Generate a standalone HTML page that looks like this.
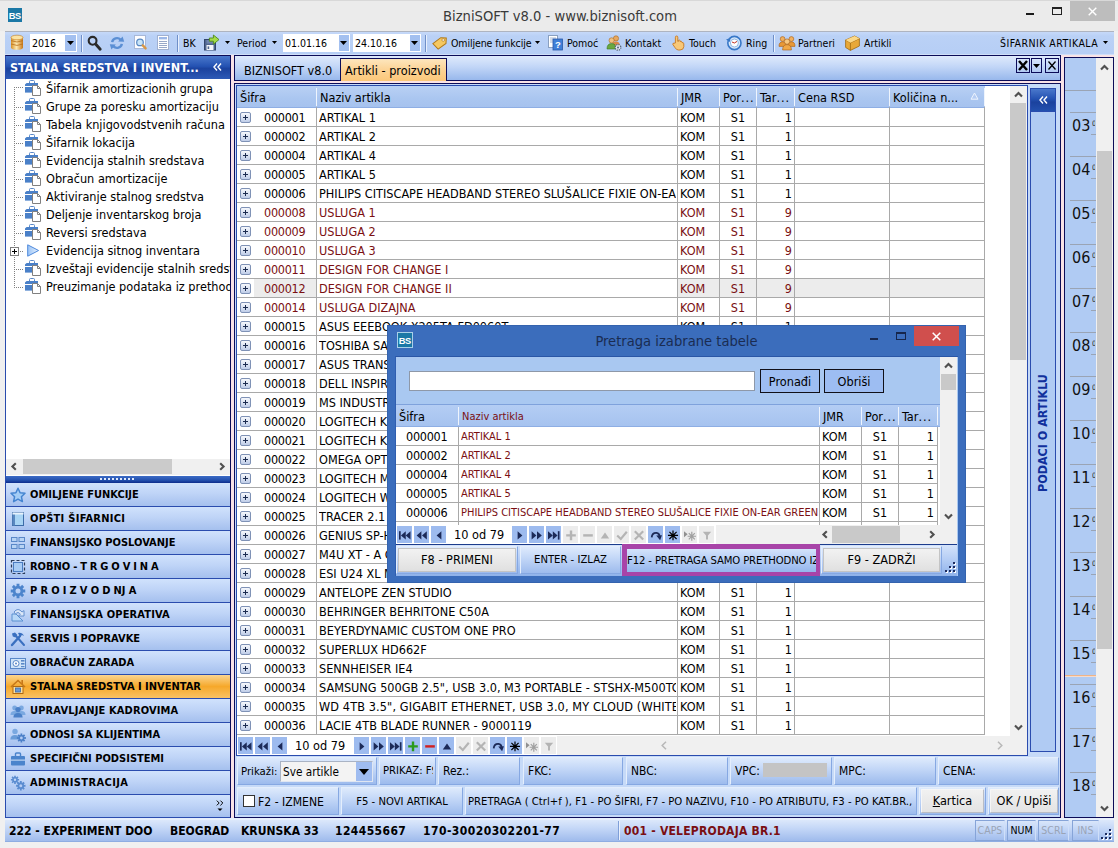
<!DOCTYPE html><html><head><meta charset="utf-8"><title>BizniSOFT v8.0</title><style>
html,body{margin:0;padding:0;}
body{width:1118px;height:848px;overflow:hidden;background:#f0f0f0;position:relative;font-family:"DejaVu Sans Condensed","Liberation Sans","DejaVu Sans",sans-serif;font-size:12.5px;color:#000;}
div{position:absolute;box-sizing:border-box;white-space:nowrap;}
svg{position:absolute;overflow:visible;}
.t{line-height:16px;height:16px;}
.tb{font-size:10.5px;line-height:14px;height:14px;}
.b{font-weight:bold;}
.nav{left:6px;width:224px;height:24px;border-bottom:1px solid #2a4cae;background:linear-gradient(#d0e2fc 0%,#bfd4f7 45%,#a5c0ee 100%);}
.nav span{position:absolute;left:24px;top:5px;font-weight:bold;font-size:11px;line-height:14px;}
.nav.sel{background:linear-gradient(#fbd590 0%,#f6a82a 50%,#f9c264 100%);}
.pan{background:linear-gradient(#deeafc 0%,#c3d7f7 42%,#9dbbed 100%);border:1px solid #86a8e2;border-top-color:#e4eefc;border-left-color:#e4eefc;}
.cell{overflow:hidden;line-height:18px;height:18px;}
.r{color:#7a0f12;}
.nb{width:15px;height:17px;background:#9dbbef;}
.nbd{width:15px;height:17px;background:#ececec;}
</style></head><body>
<div style="left:0px;top:0px;width:1118px;height:31px;background:#ebebeb"></div>
<div style="left:0px;top:0px;width:1118px;height:1px;background:#d8d8d8"></div>
<div style="left:5px;top:31px;width:1109px;height:1px;background:#aeb4c0"></div>
<div style="left:8px;top:8px;width:14px;height:14px;background:#1b78a6;color:#fff;font-weight:bold;font-size:9.3px;line-height:14px;padding-top:1px;text-align:center;letter-spacing:-0.5px;text-indent:-0.5px;overflow:hidden;font-family:'Liberation Sans',sans-serif">BS</div>
<div style="left:0;top:6px;width:1118px;height:20px;line-height:20px;text-align:center;font-size:14.6px;color:#3a3a3a;padding-left:2px">BizniSOFT v8.0 - www.biznisoft.com</div>
<div style="left:1026px;top:13px;width:8px;height:2px;background:#1a1a1a"></div>
<div style="left:1052px;top:7px;width:10px;height:8px;border:1px solid #222;border-top-width:2px"></div>
<div style="left:1070px;top:1px;width:45px;height:20px;background:#bdbdbd"></div>
<svg style="left:1088px;top:7px" width="9" height="9"><path d="M.7 .7 L8.3 8.3 M8.3 .7 L.7 8.3" stroke="#fff" stroke-width="1.4" fill="none"/></svg>
<div style="left:5px;top:32px;width:1109px;height:23px;background:linear-gradient(#c6d9f9 0,#bad1f6 4px,#b6cef5 100%)"></div>
<div style="left:5px;top:54px;width:1109px;height:765px;background:#f9e2e6"></div>
<div style="left:5px;top:54px;width:1109px;height:1px;background:#cfdff8"></div>
<svg style="left:11px;top:35px" width="12" height="15" viewBox="0 0 12 15"><defs><linearGradient id="gd" x1="0" x2="1"><stop offset="0" stop-color="#d8922a"/><stop offset=".45" stop-color="#fde9b0"/><stop offset="1" stop-color="#c87818"/></linearGradient></defs><rect x="0" y="2" width="12" height="11" fill="url(#gd)"/><ellipse cx="6" cy="2.5" rx="6" ry="2.3" fill="#fbe3a4" stroke="#c27a1c" stroke-width=".6"/><ellipse cx="6" cy="12.5" rx="6" ry="2.3" fill="url(#gd)"/><path d="M0 5.6 Q6 8.4 12 5.6 M0 9 Q6 11.8 12 9" stroke="#b96f18" stroke-width=".8" fill="none"/></svg>
<div style="left:30px;top:34px;width:47px;height:18px;background:#fff"></div>
<div style="left:65px;top:35px;width:11px;height:16px;background:#a3c0f0"></div>
<svg style="left:67px;top:41px" width="7" height="4"><path d="M0 0H7L3.5 4Z" fill="#000"/></svg>
<div class="t tb" style="left:32px;top:36px;">2016</div>
<div style="left:81px;top:35px;width:1px;height:17px;background:#6f8fc8"></div>
<div style="left:82px;top:35px;width:1px;height:17px;background:#e8f0fd"></div>
<svg style="left:87px;top:35px" width="15" height="16" viewBox="0 0 15 16"><circle cx="5.6" cy="5.8" r="3.9" fill="none" stroke="#2a2a2a" stroke-width="2.1"/><path d="M8.8 9.2 L13.2 14.2" stroke="#2a2a2a" stroke-width="2.9" stroke-linecap="round"/></svg>
<svg style="left:109px;top:36px" width="16" height="14" viewBox="0 0 16 14"><g fill="none" stroke="#5b8fd4" stroke-width="2.4"><path d="M3.2 6.2 A4.9 4.6 0 0 1 11.6 3.6"/><path d="M12.8 7.8 A4.9 4.6 0 0 1 4.4 10.4"/></g><path d="M9.2 5.6 L15.2 5.8 L13.6 .6Z" fill="#5b8fd4"/><path d="M6.8 8.4 L.8 8.2 L2.4 13.4Z" fill="#5b8fd4"/></svg>
<svg style="left:134px;top:35px" width="15" height="16" viewBox="0 0 15 16"><rect x=".5" y=".5" width="11" height="13" fill="#fdfdff" stroke="#a8b8d8"/><circle cx="6" cy="7.4" r="3.3" fill="#c8e4f8" stroke="#5888c4" stroke-width="1.2"/><path d="M8.8 10.4 L11.6 13.4" stroke="#d89848" stroke-width="2.4" stroke-linecap="round"/></svg>
<svg style="left:157px;top:35px" width="13" height="16" viewBox="0 0 13 16"><rect x=".5" y=".5" width="11" height="14" fill="#fff" stroke="#a0b0d0"/><rect x="2" y="2" width="8" height="2.4" fill="#9db8e8"/><path d="M2 6.5H10M2 8.5H10M2 10.5H10M2 12.5H10" stroke="#98a8c8" stroke-width="1"/></svg>
<div style="left:177px;top:35px;width:1px;height:17px;background:#6f8fc8"></div>
<div style="left:178px;top:35px;width:1px;height:17px;background:#e8f0fd"></div>
<div class="t tb" style="left:183px;top:36px;">BK</div>
<svg style="left:203px;top:34px" width="17" height="17" viewBox="0 0 17 17"><rect x="1.5" y="5.5" width="11" height="10.5" fill="#4f6690" stroke="#33466c"/><rect x="3.5" y="6" width="7" height="3.6" fill="#6e84ac"/><rect x="3.5" y="11" width="7" height="5" fill="#f4f6fa"/><rect x="4.6" y="12.4" width="1.6" height="2.6" fill="#4f6690"/><path d="M6.4 4H10.4V1L16 5.6L10.4 10.2V7.2H6.4Z" fill="#a4dc48" stroke="#4f8a1c" stroke-width=".9"/></svg>
<svg style="left:225px;top:41px" width="5" height="3"><path d="M0 0H5L2.5 3Z" fill="#000"/></svg>
<div class="t tb" style="left:237px;top:36px;">Period</div>
<svg style="left:272px;top:41px" width="5" height="3"><path d="M0 0H5L2.5 3Z" fill="#000"/></svg>
<div style="left:283px;top:34px;width:67px;height:18px;background:#fff"></div>
<div style="left:339px;top:35px;width:10px;height:16px;background:#a3c0f0"></div>
<svg style="left:340px;top:41px" width="7" height="4"><path d="M0 0H7L3.5 4Z" fill="#000"/></svg>
<div class="t tb" style="left:285px;top:36px;">01.01.16</div>
<div style="left:353px;top:34px;width:68px;height:18px;background:#fff"></div>
<div style="left:410px;top:35px;width:10px;height:16px;background:#a3c0f0"></div>
<svg style="left:411px;top:41px" width="7" height="4"><path d="M0 0H7L3.5 4Z" fill="#000"/></svg>
<div class="t tb" style="left:355px;top:36px;">24.10.16</div>
<div style="left:425px;top:35px;width:1px;height:17px;background:#6f8fc8"></div>
<div style="left:426px;top:35px;width:1px;height:17px;background:#e8f0fd"></div>
<svg style="left:432px;top:36px" width="15" height="14" viewBox="0 0 15 14"><path d="M1 8.5 L8 1.5 L13.5 1 L14 6.5 L7 13.2 Z" fill="#f5c860" stroke="#b07818" stroke-width="1" transform="rotate(8 7 7)"/><circle cx="11.2" cy="4" r="1.3" fill="#fff" stroke="#b07818" stroke-width=".7"/></svg>
<div class="t tb" style="left:451px;top:36px;letter-spacing:-0.1px">Omiljene funkcije</div>
<svg style="left:535px;top:41px" width="5" height="3"><path d="M0 0H5L2.5 3Z" fill="#000"/></svg>
<svg style="left:548px;top:35px" width="15" height="16" viewBox="0 0 15 16"><rect x=".5" y=".5" width="9" height="12" fill="#fff" stroke="#8aa0c0"/><path d="M2 3H8M2 5H8M2 7H8" stroke="#a8b8d0"/><rect x="5" y="4" width="9.5" height="11" fill="#3f7fd8" stroke="#2a58a8" stroke-width=".8"/><text x="9.8" y="13" font-size="9.5" font-weight="bold" fill="#fff" text-anchor="middle" font-family="Liberation Sans,sans-serif">?</text></svg>
<div class="t tb" style="left:567px;top:36px;">Pomoć</div>
<svg style="left:607px;top:35px" width="15" height="16" viewBox="0 0 15 16"><circle cx="9" cy="3.4" r="2.6" fill="#e8a860" stroke="#a86820" stroke-width=".6"/><path d="M5 11 Q5 6.5 9 6.5 Q13 6.5 13 11Z" fill="#d88848"/><circle cx="4.6" cy="5.4" r="2.6" fill="#f0c080" stroke="#a86820" stroke-width=".6"/><path d="M0 14 Q0 8.6 4.6 8.6 Q9.2 8.6 9.2 14Z" fill="#6aa840" stroke="#3c7820" stroke-width=".6"/><circle cx="11" cy="12.4" r="2.8" fill="#e4e8f0" stroke="#55657c" stroke-width="1.3" stroke-dasharray="1.3 .9"/><circle cx="11" cy="12.4" r="1" fill="#55657c"/></svg>
<div class="t tb" style="left:625px;top:36px;">Kontakt</div>
<svg style="left:672px;top:35px" width="13" height="16" viewBox="0 0 13 16"><path d="M3.4 8V2.2Q3.4 1 4.6 1T5.8 2.2V6.4H6.4V5.4Q7.4 4.6 8.2 5.6V6.6Q9.4 5.8 10 7V7.6Q11.6 7.2 11.8 8.8V11.6Q11.6 15 8 15H6.4Q4.4 15 3 12.6L.8 9.4Q.6 8 2 8.2Z" fill="#f8c878" stroke="#c87820" stroke-width=".9"/></svg>
<div class="t tb" style="left:689px;top:36px;">Touch</div>
<svg style="left:726px;top:35px" width="16" height="16" viewBox="0 0 16 16"><circle cx="8.4" cy="8" r="6.6" fill="#d8e8fa" stroke="#3878c8" stroke-width="1.6"/><circle cx="8.4" cy="8" r="4" fill="#fff" stroke="#78a8e0" stroke-width=".8"/><path d="M8.4 8 L11 6.4 M8.4 8 L6 7" stroke="#c03020" stroke-width="1"/><path d="M0 4.5 L4.6 3 L3.8 7Z" fill="#3878c8"/></svg>
<div class="t tb" style="left:746px;top:36px;">Ring</div>
<div style="left:773px;top:35px;width:1px;height:17px;background:#6f8fc8"></div>
<div style="left:774px;top:35px;width:1px;height:17px;background:#e8f0fd"></div>
<svg style="left:779px;top:35px" width="16" height="16" viewBox="0 0 16 16"><g stroke="#a85c10" stroke-width=".6"><circle cx="3.6" cy="4" r="2.4" fill="#f0b060"/><path d="M0 11.4Q0 6.8 3.6 6.8T7.2 11.4Z" fill="#e89838"/><circle cx="12.4" cy="4" r="2.4" fill="#f0b060"/><path d="M8.8 11.4Q8.8 6.8 12.4 6.8T16 11.4Z" fill="#e89838"/><circle cx="8" cy="6.6" r="2.7" fill="#f8c880"/><path d="M3.6 15Q3.6 9.6 8 9.6T12.4 15Z" fill="#f0a848"/></g></svg>
<div class="t tb" style="left:798px;top:36px;">Partneri</div>
<svg style="left:845px;top:35px" width="15" height="16" viewBox="0 0 15 16"><path d="M.6 5 L9.6 1 L14.4 3.6 L14.4 11 L5.4 15.4 L.6 12.4Z" fill="#e8a838" stroke="#a06810" stroke-width=".8"/><path d="M.6 5 L5.4 7.8 L14.4 3.6 M5.4 7.8 V15.4" stroke="#a06810" stroke-width=".8" fill="none"/><path d="M.6 5 L9.6 1 L14.4 3.6 L5.4 7.8Z" fill="#fbd888"/></svg>
<div class="t tb" style="left:864px;top:36px;">Artikli</div>
<div class="t tb" style="left:1000px;top:36px;letter-spacing:0.45px">ŠIFARNIK ARTIKALA</div>
<svg style="left:1103px;top:41px" width="5" height="3"><path d="M0 0H5L2.5 3Z" fill="#000"/></svg>
<div style="left:5px;top:55px;width:226px;height:763px;background:#fff;border:1px solid #2a4cae;border-top-color:#0c0c58;border-right-color:#0c0c58"></div>
<div style="left:6px;top:56px;width:224px;height:23px;background:linear-gradient(#4a78cc 0%,#2452b2 45%,#1b429e 55%,#2d5ab6 100%)"></div>
<div class="t" style="left:10px;top:60px;color:#fff;font-weight:bold;font-size:12.5px">STALNA SREDSTVA I INVENT...</div>
<svg style="left:213px;top:63px" width="9" height="8"><path d="M4 .5L1 4L4 7.5M8 .5L5 4L8 7.5" stroke="#fff" stroke-width="1.4" fill="none"/></svg>
<div style="left:6px;top:79px;width:224px;height:380px;overflow:hidden"><!--tree--></div>
<div style="left:14px;top:87px;width:1px;height:201px;background:repeating-linear-gradient(#808080 0 1px,transparent 1px 2px)"></div>
<div style="left:15px;top:87px;width:9px;height:1px;background:repeating-linear-gradient(90deg,transparent 0 1px,#808080 1px 2px)"></div>
<svg style="left:25px;top:80px" width="16" height="16" viewBox="0 0 16 16"><path d="M4.5 3V1.5Q4.5 .5 5.5 .5H8.5Q9.5 .5 9.5 1.5V3" fill="none" stroke="#5a88c8" stroke-width="1"/><path d="M0 6V4.6L1.6 3H13V6Z" fill="#4a80c8"/><rect x="0" y="7" width="7" height="5.6" fill="#4a80c8"/><path d="M7.5 5.5H12.5L15.5 8.5V15.5H7.5Z" fill="#fff" stroke="#808080" stroke-width="1"/><path d="M12.5 5.5V8.5H15.5" fill="none" stroke="#808080" stroke-width="1"/></svg>
<div class="t" style="left:46px;top:80px;width:184px;overflow:hidden;line-height:17px;height:18px;font-size:12.6px">Šifarnik amortizacionih grupa</div>
<div style="left:15px;top:107px;width:9px;height:1px;background:repeating-linear-gradient(90deg,transparent 0 1px,#808080 1px 2px)"></div>
<svg style="left:25px;top:98px" width="16" height="16" viewBox="0 0 16 16"><path d="M4.5 3V1.5Q4.5 .5 5.5 .5H8.5Q9.5 .5 9.5 1.5V3" fill="none" stroke="#5a88c8" stroke-width="1"/><path d="M0 6V4.6L1.6 3H13V6Z" fill="#4a80c8"/><rect x="0" y="7" width="7" height="5.6" fill="#4a80c8"/><path d="M7.5 5.5H12.5L15.5 8.5V15.5H7.5Z" fill="#fff" stroke="#808080" stroke-width="1"/><path d="M12.5 5.5V8.5H15.5" fill="none" stroke="#808080" stroke-width="1"/></svg>
<div class="t" style="left:46px;top:98px;width:184px;overflow:hidden;line-height:17px;height:18px;font-size:12.6px">Grupe za poresku amortizaciju</div>
<div style="left:15px;top:125px;width:9px;height:1px;background:repeating-linear-gradient(90deg,transparent 0 1px,#808080 1px 2px)"></div>
<svg style="left:25px;top:116px" width="16" height="16" viewBox="0 0 16 16"><path d="M4.5 3V1.5Q4.5 .5 5.5 .5H8.5Q9.5 .5 9.5 1.5V3" fill="none" stroke="#5a88c8" stroke-width="1"/><path d="M0 6V4.6L1.6 3H13V6Z" fill="#4a80c8"/><rect x="0" y="7" width="7" height="5.6" fill="#4a80c8"/><path d="M7.5 5.5H12.5L15.5 8.5V15.5H7.5Z" fill="#fff" stroke="#808080" stroke-width="1"/><path d="M12.5 5.5V8.5H15.5" fill="none" stroke="#808080" stroke-width="1"/></svg>
<div class="t" style="left:46px;top:116px;width:184px;overflow:hidden;line-height:17px;height:18px;font-size:12.6px">Tabela knjigovodstvenih računa</div>
<div style="left:15px;top:143px;width:9px;height:1px;background:repeating-linear-gradient(90deg,transparent 0 1px,#808080 1px 2px)"></div>
<svg style="left:25px;top:134px" width="16" height="16" viewBox="0 0 16 16"><path d="M4.5 3V1.5Q4.5 .5 5.5 .5H8.5Q9.5 .5 9.5 1.5V3" fill="none" stroke="#5a88c8" stroke-width="1"/><path d="M0 6V4.6L1.6 3H13V6Z" fill="#4a80c8"/><rect x="0" y="7" width="7" height="5.6" fill="#4a80c8"/><path d="M7.5 5.5H12.5L15.5 8.5V15.5H7.5Z" fill="#fff" stroke="#808080" stroke-width="1"/><path d="M12.5 5.5V8.5H15.5" fill="none" stroke="#808080" stroke-width="1"/></svg>
<div class="t" style="left:46px;top:134px;width:184px;overflow:hidden;line-height:17px;height:18px;font-size:12.6px">Šifarnik lokacija</div>
<div style="left:15px;top:161px;width:9px;height:1px;background:repeating-linear-gradient(90deg,transparent 0 1px,#808080 1px 2px)"></div>
<svg style="left:25px;top:152px" width="16" height="16" viewBox="0 0 16 16"><path d="M4.5 3V1.5Q4.5 .5 5.5 .5H8.5Q9.5 .5 9.5 1.5V3" fill="none" stroke="#5a88c8" stroke-width="1"/><path d="M0 6V4.6L1.6 3H13V6Z" fill="#4a80c8"/><rect x="0" y="7" width="7" height="5.6" fill="#4a80c8"/><path d="M7.5 5.5H12.5L15.5 8.5V15.5H7.5Z" fill="#fff" stroke="#808080" stroke-width="1"/><path d="M12.5 5.5V8.5H15.5" fill="none" stroke="#808080" stroke-width="1"/></svg>
<div class="t" style="left:46px;top:152px;width:184px;overflow:hidden;line-height:17px;height:18px;font-size:12.6px">Evidencija stalnih sredstava</div>
<div style="left:15px;top:179px;width:9px;height:1px;background:repeating-linear-gradient(90deg,transparent 0 1px,#808080 1px 2px)"></div>
<svg style="left:25px;top:170px" width="16" height="16" viewBox="0 0 16 16"><path d="M4.5 3V1.5Q4.5 .5 5.5 .5H8.5Q9.5 .5 9.5 1.5V3" fill="none" stroke="#5a88c8" stroke-width="1"/><path d="M0 6V4.6L1.6 3H13V6Z" fill="#4a80c8"/><rect x="0" y="7" width="7" height="5.6" fill="#4a80c8"/><path d="M7.5 5.5H12.5L15.5 8.5V15.5H7.5Z" fill="#fff" stroke="#808080" stroke-width="1"/><path d="M12.5 5.5V8.5H15.5" fill="none" stroke="#808080" stroke-width="1"/></svg>
<div class="t" style="left:46px;top:170px;width:184px;overflow:hidden;line-height:17px;height:18px;font-size:12.6px">Obračun amortizacije</div>
<div style="left:15px;top:197px;width:9px;height:1px;background:repeating-linear-gradient(90deg,transparent 0 1px,#808080 1px 2px)"></div>
<svg style="left:25px;top:188px" width="16" height="16" viewBox="0 0 16 16"><path d="M4.5 3V1.5Q4.5 .5 5.5 .5H8.5Q9.5 .5 9.5 1.5V3" fill="none" stroke="#5a88c8" stroke-width="1"/><path d="M0 6V4.6L1.6 3H13V6Z" fill="#4a80c8"/><rect x="0" y="7" width="7" height="5.6" fill="#4a80c8"/><path d="M7.5 5.5H12.5L15.5 8.5V15.5H7.5Z" fill="#fff" stroke="#808080" stroke-width="1"/><path d="M12.5 5.5V8.5H15.5" fill="none" stroke="#808080" stroke-width="1"/></svg>
<div class="t" style="left:46px;top:188px;width:184px;overflow:hidden;line-height:17px;height:18px;font-size:12.6px">Aktiviranje stalnog sredstva</div>
<div style="left:15px;top:215px;width:9px;height:1px;background:repeating-linear-gradient(90deg,transparent 0 1px,#808080 1px 2px)"></div>
<svg style="left:25px;top:206px" width="16" height="16" viewBox="0 0 16 16"><path d="M4.5 3V1.5Q4.5 .5 5.5 .5H8.5Q9.5 .5 9.5 1.5V3" fill="none" stroke="#5a88c8" stroke-width="1"/><path d="M0 6V4.6L1.6 3H13V6Z" fill="#4a80c8"/><rect x="0" y="7" width="7" height="5.6" fill="#4a80c8"/><path d="M7.5 5.5H12.5L15.5 8.5V15.5H7.5Z" fill="#fff" stroke="#808080" stroke-width="1"/><path d="M12.5 5.5V8.5H15.5" fill="none" stroke="#808080" stroke-width="1"/></svg>
<div class="t" style="left:46px;top:206px;width:184px;overflow:hidden;line-height:17px;height:18px;font-size:12.6px">Deljenje inventarskog broja</div>
<div style="left:15px;top:233px;width:9px;height:1px;background:repeating-linear-gradient(90deg,transparent 0 1px,#808080 1px 2px)"></div>
<svg style="left:25px;top:224px" width="16" height="16" viewBox="0 0 16 16"><path d="M4.5 3V1.5Q4.5 .5 5.5 .5H8.5Q9.5 .5 9.5 1.5V3" fill="none" stroke="#5a88c8" stroke-width="1"/><path d="M0 6V4.6L1.6 3H13V6Z" fill="#4a80c8"/><rect x="0" y="7" width="7" height="5.6" fill="#4a80c8"/><path d="M7.5 5.5H12.5L15.5 8.5V15.5H7.5Z" fill="#fff" stroke="#808080" stroke-width="1"/><path d="M12.5 5.5V8.5H15.5" fill="none" stroke="#808080" stroke-width="1"/></svg>
<div class="t" style="left:46px;top:224px;width:184px;overflow:hidden;line-height:17px;height:18px;font-size:12.6px">Reversi sredstava</div>
<div style="left:15px;top:251px;width:4px;height:1px;background:repeating-linear-gradient(90deg,transparent 0 1px,#808080 1px 2px)"></div>
<div style="left:10px;top:247px;width:9px;height:9px;background:#fff;border:1px solid #808080"></div>
<div style="left:12px;top:251px;width:5px;height:1px;background:#000"></div>
<div style="left:14px;top:249px;width:1px;height:5px;background:#000"></div>
<div style="left:19px;top:251px;width:5px;height:1px;background:repeating-linear-gradient(90deg,transparent 0 1px,#808080 1px 2px)"></div>
<svg style="left:27px;top:244px" width="13" height="13"><defs><linearGradient id="tg" x1="0" x2="1"><stop offset="0" stop-color="#9cc4f6"/><stop offset="1" stop-color="#e4f0fd"/></linearGradient></defs><path d="M.7 .8L11.6 6.5L.7 12.2Z" fill="url(#tg)" stroke="#4f8adc" stroke-width="1"/></svg>
<div class="t" style="left:46px;top:242px;width:184px;overflow:hidden;line-height:17px;height:18px;font-size:12.6px">Evidencija sitnog inventara</div>
<div style="left:15px;top:269px;width:9px;height:1px;background:repeating-linear-gradient(90deg,transparent 0 1px,#808080 1px 2px)"></div>
<svg style="left:25px;top:260px" width="16" height="16" viewBox="0 0 16 16"><path d="M4.5 3V1.5Q4.5 .5 5.5 .5H8.5Q9.5 .5 9.5 1.5V3" fill="none" stroke="#5a88c8" stroke-width="1"/><path d="M0 6V4.6L1.6 3H13V6Z" fill="#4a80c8"/><rect x="0" y="7" width="7" height="5.6" fill="#4a80c8"/><path d="M7.5 5.5H12.5L15.5 8.5V15.5H7.5Z" fill="#fff" stroke="#808080" stroke-width="1"/><path d="M12.5 5.5V8.5H15.5" fill="none" stroke="#808080" stroke-width="1"/></svg>
<div class="t" style="left:46px;top:260px;width:184px;overflow:hidden;line-height:17px;height:18px;font-size:12.6px">Izveštaji evidencije stalnih sredstava</div>
<div style="left:15px;top:287px;width:9px;height:1px;background:repeating-linear-gradient(90deg,transparent 0 1px,#808080 1px 2px)"></div>
<svg style="left:25px;top:278px" width="16" height="16" viewBox="0 0 16 16"><path d="M4.5 3V1.5Q4.5 .5 5.5 .5H8.5Q9.5 .5 9.5 1.5V3" fill="none" stroke="#5a88c8" stroke-width="1"/><path d="M0 6V4.6L1.6 3H13V6Z" fill="#4a80c8"/><rect x="0" y="7" width="7" height="5.6" fill="#4a80c8"/><path d="M7.5 5.5H12.5L15.5 8.5V15.5H7.5Z" fill="#fff" stroke="#808080" stroke-width="1"/><path d="M12.5 5.5V8.5H15.5" fill="none" stroke="#808080" stroke-width="1"/></svg>
<div class="t" style="left:46px;top:278px;width:184px;overflow:hidden;line-height:17px;height:18px;font-size:12.6px">Preuzimanje podataka iz prethodne godine</div>
<div style="left:6px;top:459px;width:224px;height:16px;background:#f0f0f0"></div>
<div style="left:23px;top:459px;width:149px;height:15px;background:#cbcbcb"></div>
<svg style="left:11px;top:462px" width="6" height="9"><path d="M4.8 1.2L1.4 4.5L4.8 7.8" stroke="#505050" stroke-width="2.1" fill="none"/></svg>
<svg style="left:219px;top:462px" width="6" height="9"><path d="M1.2 1.2L4.6 4.5L1.2 7.8" stroke="#505050" stroke-width="2.1" fill="none"/></svg>
<div style="left:6px;top:476px;width:224px;height:7px;background:linear-gradient(#3c6cc6 0%,#2350ae 60%,#0c2c8c 100%)"></div>
<div style="left:100px;top:478px;width:36px;height:2px;background:repeating-linear-gradient(90deg,#dfe9fb 0 2px,transparent 2px 4px)"></div>
<div class="nav" style="top:483px"><svg style="left:4px;top:4px" width="16" height="16" viewBox="0 0 16 16"><path d="M8 1.2L10.1 5.7L15 6.3L11.4 9.7L12.4 14.6L8 12.1L3.6 14.6L4.6 9.7L1 6.3L5.9 5.7Z" fill="#a4cdf6" stroke="#4484d0" stroke-width="1.5" stroke-linejoin="round"/></svg><span style="">OMILJENE FUNKCIJE</span></div>
<div class="nav" style="top:507px"><svg style="left:4px;top:4px" width="16" height="16" viewBox="0 0 16 16"><rect x="2.5" y="1.5" width="11" height="13" fill="#a8d4f4" stroke="#3c6ca8"/><rect x="2.5" y="1.5" width="2.5" height="13" fill="#5a88c0"/><rect x="2.5" y="1.5" width="11" height="2" fill="#e8f2fc"/></svg><span style="letter-spacing:0.27px">OPŠTI ŠIFARNICI</span></div>
<div class="nav" style="top:531px"><svg style="left:4px;top:4px" width="16" height="16" viewBox="0 0 16 16"><g fill="#b8d4f4" stroke="#5a88c8" stroke-width="1"><rect x="1.5" y="2.5" width="5.5" height="4"/><rect x="9" y="2.5" width="5.5" height="4"/><rect x="1.5" y="9.5" width="5.5" height="4"/><rect x="9" y="9.5" width="5.5" height="4"/></g></svg><span style="">FINANSIJSKO POSLOVANJE</span></div>
<div class="nav" style="top:555px"><svg style="left:4px;top:4px" width="16" height="16" viewBox="0 0 16 16"><rect x="1.5" y="1.5" width="13" height="13" fill="none" stroke="#2c3c58" stroke-width="1.2" stroke-dasharray="3 2"/><rect x="3.5" y="3.5" width="9" height="9" fill="#a8ccf4" stroke="#4a7cc0"/></svg><span style="word-spacing:-0.55px">ROBNO - T R G O V I N A</span></div>
<div class="nav" style="top:579px"><svg style="left:4px;top:4px" width="16" height="16" viewBox="0 0 16 16"><path d="M15.26 6.56L15.26 9.44L13.10 9.44L12.62 10.59L14.15 12.11L12.11 14.15L10.59 12.62L9.44 13.10L9.44 15.26L6.56 15.26L6.56 13.10L5.41 12.62L3.89 14.15L1.85 12.11L3.38 10.59L2.90 9.44L0.74 9.44L0.74 6.56L2.90 6.56L3.38 5.41L1.85 3.89L3.89 1.85L5.41 3.38L6.56 2.90L6.56 0.74L9.44 0.74L9.44 2.90L10.59 3.38L12.11 1.85L14.15 3.89L12.62 5.41L13.10 6.56ZM10.50 8.00A2.5 2.5 0 1 0 5.50 8.00A2.5 2.5 0 1 0 10.50 8.00Z" fill="#4c84cc" fill-rule="evenodd"/></svg><span style="word-spacing:-0.3px">P R O I Z V O D NJ A</span></div>
<div class="nav" style="top:603px"><svg style="left:4px;top:4px" width="16" height="16" viewBox="0 0 16 16"><path d="M2 14V7H6L13 14Z" fill="#b8d8f8" stroke="#5a90d0"/><path d="M4 5Q8 0 12 5L14 3.6V9H8.6L10.4 7.2Q8 4 5.6 7Z" fill="#dce8f8" stroke="#5a88c8" stroke-width=".9"/></svg><span style="letter-spacing:0.14px">FINANSIJSKA OPERATIVA</span></div>
<div class="nav" style="top:627px"><svg style="left:4px;top:4px" width="16" height="16" viewBox="0 0 16 16"><path d="M2 14L10 5" stroke="#3a70c0" stroke-width="2.4" stroke-linecap="round"/><path d="M8 2Q12 1 14 5L12 4L10 6Z" fill="#3a70c0"/><path d="M14 14L6 5" stroke="#3a70c0" stroke-width="2" stroke-linecap="round"/><path d="M2 2.4L5 1.4L7.4 4L5.4 6.4L2.8 5.4Z" fill="#3a70c0"/></svg><span style="">SERVIS I POPRAVKE</span></div>
<div class="nav" style="top:651px"><svg style="left:4px;top:4px" width="16" height="16" viewBox="0 0 16 16"><rect x=".5" y="3.5" width="15" height="10" fill="#d0e4f8" stroke="#5a88c8"/><circle cx="6" cy="8.5" r="3" fill="#fff" stroke="#5a88c8"/><rect x="11" y="5" width="3.5" height="1.6" fill="#5a88c8"/><rect x="11" y="8" width="3.5" height="1.6" fill="#5a88c8"/><rect x="11" y="11" width="3.5" height="1.2" fill="#5a88c8"/><circle cx="6" cy="8.5" r="1" fill="#5a88c8"/></svg><span style="">OBRAČUN ZARADA</span></div>
<div class="nav sel" style="top:675px"><svg style="left:4px;top:4px" width="16" height="16" viewBox="0 0 16 16"><path d="M1 8L8 1.5L15 8" fill="none" stroke="#c87818" stroke-width="1.6"/><rect x="3" y="7.5" width="10" height="7" fill="#fce0a0" stroke="#b06810"/><rect x="5.5" y="9" width="5" height="4" fill="#6a98d0" stroke="#3a68a8" stroke-width=".8"/><rect x="11.4" y="1" width="1.6" height="4" fill="#c87818"/></svg><span style="">STALNA SREDSTVA I INVENTAR</span></div>
<div class="nav" style="top:699px"><svg style="left:4px;top:4px" width="16" height="16" viewBox="0 0 16 16"><circle cx="4.6" cy="5" r="2.4" fill="#7aa8e0"/><path d="M.5 12Q.5 8 4.6 8T8.7 12Z" fill="#7aa8e0"/><circle cx="11.4" cy="5" r="2.4" fill="#7aa8e0"/><path d="M7.3 12Q7.3 8 11.4 8T15.5 12Z" fill="#7aa8e0"/><circle cx="8" cy="6.6" r="2.7" fill="#4a80c8"/><path d="M3.4 14.6Q3.4 10 8 10T12.6 14.6Z" fill="#4a80c8"/></svg><span style="letter-spacing:0.14px">UPRAVLJANJE KADROVIMA</span></div>
<div class="nav" style="top:723px"><svg style="left:4px;top:4px" width="16" height="16" viewBox="0 0 16 16"><circle cx="5" cy="4.4" r="2.7" fill="#7aa8e0"/><path d="M.4 12.6Q.4 8 5 8T9.6 12.6Z" fill="#6a9cd8"/><path d="M15.91 10.10L15.91 11.90L14.48 11.87L14.19 12.56L15.22 13.56L13.96 14.82L12.96 13.79L12.27 14.08L12.30 15.51L10.50 15.51L10.53 14.08L9.84 13.79L8.84 14.82L7.58 13.56L8.61 12.56L8.32 11.87L6.89 11.90L6.89 10.10L8.32 10.13L8.61 9.44L7.58 8.44L8.84 7.18L9.84 8.21L10.53 7.92L10.50 6.49L12.30 6.49L12.27 7.92L12.96 8.21L13.96 7.18L15.22 8.44L14.19 9.44L14.48 10.13ZM12.80 11.00A1.4 1.4 0 1 0 10.00 11.00A1.4 1.4 0 1 0 12.80 11.00Z" fill="#4c80c8" fill-rule="evenodd"/></svg><span style="">ODNOSI SA KLIJENTIMA</span></div>
<div class="nav" style="top:747px"><svg style="left:4px;top:4px" width="16" height="16" viewBox="0 0 16 16"><rect x="1" y="5" width="14" height="9.5" rx="1" fill="#4a84cc"/><path d="M5.5 5V3Q5.5 2 6.5 2H9.5Q10.5 2 10.5 3V5" fill="none" stroke="#4a84cc" stroke-width="1.4"/><rect x="1" y="8.6" width="14" height="1" fill="#d4e4f8"/></svg><span style="">SPECIFIČNI PODSISTEMI</span></div>
<div class="nav" style="top:771px"><svg style="left:4px;top:4px" width="16" height="16" viewBox="0 0 16 16"><path d="M9.12 3.98L9.12 5.62L7.79 5.59L7.53 6.22L8.49 7.13L7.33 8.29L6.42 7.33L5.79 7.59L5.82 8.92L4.18 8.92L4.21 7.59L3.58 7.33L2.67 8.29L1.51 7.13L2.47 6.22L2.21 5.59L0.88 5.62L0.88 3.98L2.21 4.01L2.47 3.38L1.51 2.47L2.67 1.31L3.58 2.27L4.21 2.01L4.18 0.68L5.82 0.68L5.79 2.01L6.42 2.27L7.33 1.31L8.49 2.47L7.53 3.38L7.79 4.01ZM6.20 4.80A1.2 1.2 0 1 0 3.80 4.80A1.2 1.2 0 1 0 6.20 4.80Z" fill="#5a8cd0" fill-rule="evenodd"/><path d="M15.51 9.86L15.51 11.74L14.07 11.72L13.77 12.46L14.79 13.47L13.47 14.79L12.46 13.77L11.72 14.07L11.74 15.51L9.86 15.51L9.88 14.07L9.14 13.77L8.13 14.79L6.81 13.47L7.83 12.46L7.53 11.72L6.09 11.74L6.09 9.86L7.53 9.88L7.83 9.14L6.81 8.13L8.13 6.81L9.14 7.83L9.88 7.53L9.86 6.09L11.74 6.09L11.72 7.53L12.46 7.83L13.47 6.81L14.79 8.13L13.77 9.14L14.07 9.88ZM12.30 10.80A1.5 1.5 0 1 0 9.30 10.80A1.5 1.5 0 1 0 12.30 10.80Z" fill="#5a8cd0" fill-rule="evenodd"/></svg><span style="letter-spacing:0.4px">ADMINISTRACIJA</span></div>
<div style="left:6px;top:795px;width:224px;height:22px;background:linear-gradient(#d0e2fc 0%,#bfd4f7 45%,#a5c0ee 100%)"></div>
<svg style="left:216px;top:800px" width="8" height="12"><path d="M.8 .6L3.2 3L.8 5.4M4.4 .6L6.8 3L4.4 5.4" stroke="#000" stroke-width="1" fill="none"/><path d="M1.5 8.5H6.5L4 11Z" fill="#000"/></svg>
<div style="left:234px;top:55px;width:827px;height:26px;border:1px solid #0c0c58;background:linear-gradient(#dfeafc 0%,#c2d6f7 45%,#98b8ec 100%)"></div>
<div class="t" style="left:244px;top:63px;font-size:12.6px">BIZNISOFT v8.0</div>
<div style="left:340px;top:58px;width:107px;height:23px;border:1px solid #0c0c58;border-bottom:none;background:linear-gradient(#fde6bd 0%,#fcd395 50%,#fbc779 100%)"></div>
<div class="t" style="left:345px;top:63px;font-size:12.6px">Artikli - proizvodi</div>
<div style="left:1016px;top:58px;width:14px;height:15px;border:1px solid #0c0c58"></div>
<svg style="left:1018px;top:60px" width="10" height="11"><path d="M1 1L9 10M9 1L1 10" stroke="#000" stroke-width="2.4" fill="none"/></svg>
<div style="left:1031px;top:58px;width:11px;height:15px;border:1px solid #0c0c58"></div>
<svg style="left:1033px;top:64px" width="7" height="4"><path d="M0 0H7L3.5 4Z" fill="#000"/></svg>
<div style="left:1045px;top:58px;width:14px;height:15px;border:1px solid #0c0c58"></div>
<svg style="left:1048px;top:61px" width="8" height="9"><path d="M.5 .5L7.5 8.5M7.5 .5L.5 8.5" stroke="#000" stroke-width="1.3" fill="none"/></svg>
<div style="left:234px;top:83px;width:827px;height:735px;border:1px solid #0c0c58;background:#c6daf8"></div>
<div style="left:236px;top:85px;width:792px;height:671px;border:1px solid #2a4cae;background:#fff"></div>
<div style="left:237px;top:86px;width:748px;height:22px;background:linear-gradient(#b9d0f4 0%,#aac6f0 60%,#a6c2ee 100%);border-bottom:1px solid #8eaee4"></div>
<div class="t" style="left:240px;top:90px;font-size:12.6px">Šifra</div>
<div style="left:316px;top:88px;width:1px;height:18px;background:#eef4fd"></div>
<div class="t" style="left:320px;top:90px;font-size:12.6px">Naziv artikla</div>
<div style="left:677px;top:88px;width:1px;height:18px;background:#eef4fd"></div>
<div class="t" style="left:681px;top:90px;font-size:12.6px">JMR</div>
<div style="left:719px;top:88px;width:1px;height:18px;background:#eef4fd"></div>
<div class="t" style="left:723px;top:90px;font-size:12.6px">Por<span style="letter-spacing:0.9px">...</span></div>
<div style="left:756px;top:88px;width:1px;height:18px;background:#eef4fd"></div>
<div class="t" style="left:760px;top:90px;font-size:12.6px">Tar<span style="letter-spacing:0.9px">...</span></div>
<div style="left:794px;top:88px;width:1px;height:18px;background:#eef4fd"></div>
<div class="t" style="left:798px;top:90px;font-size:12.6px">Cena RSD</div>
<div style="left:889px;top:88px;width:1px;height:18px;background:#eef4fd"></div>
<div class="t" style="left:893px;top:90px;font-size:12.6px">Količina n...</div>
<div style="left:984px;top:88px;width:1px;height:18px;background:#eef4fd"></div>
<svg style="left:970px;top:92px" width="9" height="8"><path d="M4.5 1L8 7.2H1Z" fill="#b6cdf3" stroke="#eef4fd" stroke-width="1"/></svg>
<div style="left:316px;top:107px;width:1px;height:628px;background:#a9a9a9"></div>
<div style="left:677px;top:107px;width:1px;height:628px;background:#a9a9a9"></div>
<div style="left:719px;top:107px;width:1px;height:628px;background:#a9a9a9"></div>
<div style="left:756px;top:107px;width:1px;height:628px;background:#a9a9a9"></div>
<div style="left:794px;top:107px;width:1px;height:628px;background:#a9a9a9"></div>
<div style="left:889px;top:107px;width:1px;height:628px;background:#a9a9a9"></div>
<div style="left:984px;top:107px;width:1px;height:628px;background:#a9a9a9"></div>
<div style="left:237px;top:126px;width:748px;height:1px;background:#a9a9a9"></div>
<div style="left:240px;top:112px;width:11px;height:11px;border:1px solid #7f92b6;border-radius:2px;background:linear-gradient(#f6f8fc,#bfcde8)"></div>
<div style="left:243px;top:117px;width:5px;height:1px;background:#1c2c50"></div>
<div style="left:245px;top:115px;width:1px;height:5px;background:#1c2c50"></div>
<div class="cell" style="left:264px;top:109px;width:52px;letter-spacing:-0.25px">000001</div>
<div class="cell" style="left:319px;top:109px;width:357px;font-size:12.57px">ARTIKAL 1</div>
<div class="cell" style="left:680px;top:109px;width:38px">KOM</div>
<div class="cell" style="left:720px;top:109px;width:36px;text-align:center">S1</div>
<div class="cell" style="left:757px;top:109px;width:35px;text-align:right">1</div>
<div style="left:237px;top:145px;width:748px;height:1px;background:#a9a9a9"></div>
<div style="left:240px;top:131px;width:11px;height:11px;border:1px solid #7f92b6;border-radius:2px;background:linear-gradient(#f6f8fc,#bfcde8)"></div>
<div style="left:243px;top:136px;width:5px;height:1px;background:#1c2c50"></div>
<div style="left:245px;top:134px;width:1px;height:5px;background:#1c2c50"></div>
<div class="cell" style="left:264px;top:128px;width:52px;letter-spacing:-0.25px">000002</div>
<div class="cell" style="left:319px;top:128px;width:357px;font-size:12.57px">ARTIKAL 2</div>
<div class="cell" style="left:680px;top:128px;width:38px">KOM</div>
<div class="cell" style="left:720px;top:128px;width:36px;text-align:center">S1</div>
<div class="cell" style="left:757px;top:128px;width:35px;text-align:right">1</div>
<div style="left:237px;top:164px;width:748px;height:1px;background:#a9a9a9"></div>
<div style="left:240px;top:150px;width:11px;height:11px;border:1px solid #7f92b6;border-radius:2px;background:linear-gradient(#f6f8fc,#bfcde8)"></div>
<div style="left:243px;top:155px;width:5px;height:1px;background:#1c2c50"></div>
<div style="left:245px;top:153px;width:1px;height:5px;background:#1c2c50"></div>
<div class="cell" style="left:264px;top:147px;width:52px;letter-spacing:-0.25px">000004</div>
<div class="cell" style="left:319px;top:147px;width:357px;font-size:12.57px">ARTIKAL 4</div>
<div class="cell" style="left:680px;top:147px;width:38px">KOM</div>
<div class="cell" style="left:720px;top:147px;width:36px;text-align:center">S1</div>
<div class="cell" style="left:757px;top:147px;width:35px;text-align:right">1</div>
<div style="left:237px;top:183px;width:748px;height:1px;background:#a9a9a9"></div>
<div style="left:240px;top:169px;width:11px;height:11px;border:1px solid #7f92b6;border-radius:2px;background:linear-gradient(#f6f8fc,#bfcde8)"></div>
<div style="left:243px;top:174px;width:5px;height:1px;background:#1c2c50"></div>
<div style="left:245px;top:172px;width:1px;height:5px;background:#1c2c50"></div>
<div class="cell" style="left:264px;top:166px;width:52px;letter-spacing:-0.25px">000005</div>
<div class="cell" style="left:319px;top:166px;width:357px;font-size:12.57px">ARTIKAL 5</div>
<div class="cell" style="left:680px;top:166px;width:38px">KOM</div>
<div class="cell" style="left:720px;top:166px;width:36px;text-align:center">S1</div>
<div class="cell" style="left:757px;top:166px;width:35px;text-align:right">1</div>
<div style="left:237px;top:202px;width:748px;height:1px;background:#a9a9a9"></div>
<div style="left:240px;top:188px;width:11px;height:11px;border:1px solid #7f92b6;border-radius:2px;background:linear-gradient(#f6f8fc,#bfcde8)"></div>
<div style="left:243px;top:193px;width:5px;height:1px;background:#1c2c50"></div>
<div style="left:245px;top:191px;width:1px;height:5px;background:#1c2c50"></div>
<div class="cell" style="left:264px;top:185px;width:52px;letter-spacing:-0.25px">000006</div>
<div class="cell" style="left:319px;top:185px;width:357px;font-size:12.57px">PHILIPS CITISCAPE HEADBAND STEREO SLUŠALICE FIXIE ON-EAR GREEN</div>
<div class="cell" style="left:680px;top:185px;width:38px">KOM</div>
<div class="cell" style="left:720px;top:185px;width:36px;text-align:center">S1</div>
<div class="cell" style="left:757px;top:185px;width:35px;text-align:right">1</div>
<div style="left:237px;top:221px;width:748px;height:1px;background:#a9a9a9"></div>
<div style="left:240px;top:207px;width:11px;height:11px;border:1px solid #7f92b6;border-radius:2px;background:linear-gradient(#f6f8fc,#bfcde8)"></div>
<div style="left:243px;top:212px;width:5px;height:1px;background:#1c2c50"></div>
<div style="left:245px;top:210px;width:1px;height:5px;background:#1c2c50"></div>
<div class="cell r" style="left:264px;top:204px;width:52px;letter-spacing:-0.25px">000008</div>
<div class="cell r" style="left:319px;top:204px;width:357px;font-size:12.57px">USLUGA 1</div>
<div class="cell r" style="left:680px;top:204px;width:38px">KOM</div>
<div class="cell r" style="left:720px;top:204px;width:36px;text-align:center">S1</div>
<div class="cell r" style="left:757px;top:204px;width:35px;text-align:right">9</div>
<div style="left:237px;top:240px;width:748px;height:1px;background:#a9a9a9"></div>
<div style="left:240px;top:226px;width:11px;height:11px;border:1px solid #7f92b6;border-radius:2px;background:linear-gradient(#f6f8fc,#bfcde8)"></div>
<div style="left:243px;top:231px;width:5px;height:1px;background:#1c2c50"></div>
<div style="left:245px;top:229px;width:1px;height:5px;background:#1c2c50"></div>
<div class="cell r" style="left:264px;top:223px;width:52px;letter-spacing:-0.25px">000009</div>
<div class="cell r" style="left:319px;top:223px;width:357px;font-size:12.57px">USLUGA 2</div>
<div class="cell r" style="left:680px;top:223px;width:38px">KOM</div>
<div class="cell r" style="left:720px;top:223px;width:36px;text-align:center">S1</div>
<div class="cell r" style="left:757px;top:223px;width:35px;text-align:right">9</div>
<div style="left:237px;top:259px;width:748px;height:1px;background:#a9a9a9"></div>
<div style="left:240px;top:245px;width:11px;height:11px;border:1px solid #7f92b6;border-radius:2px;background:linear-gradient(#f6f8fc,#bfcde8)"></div>
<div style="left:243px;top:250px;width:5px;height:1px;background:#1c2c50"></div>
<div style="left:245px;top:248px;width:1px;height:5px;background:#1c2c50"></div>
<div class="cell r" style="left:264px;top:242px;width:52px;letter-spacing:-0.25px">000010</div>
<div class="cell r" style="left:319px;top:242px;width:357px;font-size:12.57px">USLUGA 3</div>
<div class="cell r" style="left:680px;top:242px;width:38px">KOM</div>
<div class="cell r" style="left:720px;top:242px;width:36px;text-align:center">S1</div>
<div class="cell r" style="left:757px;top:242px;width:35px;text-align:right">9</div>
<div style="left:237px;top:278px;width:748px;height:1px;background:#a9a9a9"></div>
<div style="left:240px;top:264px;width:11px;height:11px;border:1px solid #7f92b6;border-radius:2px;background:linear-gradient(#f6f8fc,#bfcde8)"></div>
<div style="left:243px;top:269px;width:5px;height:1px;background:#1c2c50"></div>
<div style="left:245px;top:267px;width:1px;height:5px;background:#1c2c50"></div>
<div class="cell r" style="left:264px;top:261px;width:52px;letter-spacing:-0.25px">000011</div>
<div class="cell r" style="left:319px;top:261px;width:357px;font-size:12.57px">DESIGN FOR CHANGE I</div>
<div class="cell r" style="left:680px;top:261px;width:38px">KOM</div>
<div class="cell r" style="left:720px;top:261px;width:36px;text-align:center">S1</div>
<div class="cell r" style="left:757px;top:261px;width:35px;text-align:right">9</div>
<div style="left:254px;top:279px;width:62px;height:18px;background:#ececec"></div>
<div style="left:678px;top:279px;width:306px;height:18px;background:#ececec"></div>
<div style="left:316px;top:279px;width:1px;height:18px;background:#a9a9a9"></div>
<div style="left:677px;top:279px;width:1px;height:18px;background:#a9a9a9"></div>
<div style="left:719px;top:279px;width:1px;height:18px;background:#a9a9a9"></div>
<div style="left:756px;top:279px;width:1px;height:18px;background:#a9a9a9"></div>
<div style="left:794px;top:279px;width:1px;height:18px;background:#a9a9a9"></div>
<div style="left:889px;top:279px;width:1px;height:18px;background:#a9a9a9"></div>
<div style="left:984px;top:279px;width:1px;height:18px;background:#a9a9a9"></div>
<div style="left:237px;top:297px;width:748px;height:1px;background:#a9a9a9"></div>
<div style="left:240px;top:283px;width:11px;height:11px;border:1px solid #7f92b6;border-radius:2px;background:linear-gradient(#f6f8fc,#bfcde8)"></div>
<div style="left:243px;top:288px;width:5px;height:1px;background:#1c2c50"></div>
<div style="left:245px;top:286px;width:1px;height:5px;background:#1c2c50"></div>
<div class="cell r" style="left:264px;top:280px;width:52px;letter-spacing:-0.25px">000012</div>
<div class="cell r" style="left:319px;top:280px;width:357px;font-size:12.57px">DESIGN FOR CHANGE II</div>
<div class="cell r" style="left:680px;top:280px;width:38px">KOM</div>
<div class="cell r" style="left:720px;top:280px;width:36px;text-align:center">S1</div>
<div class="cell r" style="left:757px;top:280px;width:35px;text-align:right">9</div>
<div style="left:237px;top:316px;width:748px;height:1px;background:#a9a9a9"></div>
<div style="left:240px;top:302px;width:11px;height:11px;border:1px solid #7f92b6;border-radius:2px;background:linear-gradient(#f6f8fc,#bfcde8)"></div>
<div style="left:243px;top:307px;width:5px;height:1px;background:#1c2c50"></div>
<div style="left:245px;top:305px;width:1px;height:5px;background:#1c2c50"></div>
<div class="cell r" style="left:264px;top:299px;width:52px;letter-spacing:-0.25px">000014</div>
<div class="cell r" style="left:319px;top:299px;width:357px;font-size:12.57px">USLUGA DIZAJNA</div>
<div class="cell r" style="left:680px;top:299px;width:38px">KOM</div>
<div class="cell r" style="left:720px;top:299px;width:36px;text-align:center">S1</div>
<div class="cell r" style="left:757px;top:299px;width:35px;text-align:right">9</div>
<div style="left:237px;top:335px;width:748px;height:1px;background:#a9a9a9"></div>
<div style="left:240px;top:321px;width:11px;height:11px;border:1px solid #7f92b6;border-radius:2px;background:linear-gradient(#f6f8fc,#bfcde8)"></div>
<div style="left:243px;top:326px;width:5px;height:1px;background:#1c2c50"></div>
<div style="left:245px;top:324px;width:1px;height:5px;background:#1c2c50"></div>
<div class="cell" style="left:264px;top:318px;width:52px;letter-spacing:-0.25px">000015</div>
<div class="cell" style="left:319px;top:318px;width:357px;font-size:12.57px">ASUS EEEBOOK X205TA-FD0060T</div>
<div class="cell" style="left:680px;top:318px;width:38px">KOM</div>
<div class="cell" style="left:720px;top:318px;width:36px;text-align:center">S1</div>
<div class="cell" style="left:757px;top:318px;width:35px;text-align:right">1</div>
<div style="left:237px;top:354px;width:748px;height:1px;background:#a9a9a9"></div>
<div style="left:240px;top:340px;width:11px;height:11px;border:1px solid #7f92b6;border-radius:2px;background:linear-gradient(#f6f8fc,#bfcde8)"></div>
<div style="left:243px;top:345px;width:5px;height:1px;background:#1c2c50"></div>
<div style="left:245px;top:343px;width:1px;height:5px;background:#1c2c50"></div>
<div class="cell" style="left:264px;top:337px;width:52px;letter-spacing:-0.25px">000016</div>
<div class="cell" style="left:319px;top:337px;width:357px;font-size:12.57px">TOSHIBA SATELLITE L50-B-1P1</div>
<div class="cell" style="left:680px;top:337px;width:38px">KOM</div>
<div class="cell" style="left:720px;top:337px;width:36px;text-align:center">S1</div>
<div class="cell" style="left:757px;top:337px;width:35px;text-align:right">1</div>
<div style="left:237px;top:373px;width:748px;height:1px;background:#a9a9a9"></div>
<div style="left:240px;top:359px;width:11px;height:11px;border:1px solid #7f92b6;border-radius:2px;background:linear-gradient(#f6f8fc,#bfcde8)"></div>
<div style="left:243px;top:364px;width:5px;height:1px;background:#1c2c50"></div>
<div style="left:245px;top:362px;width:1px;height:5px;background:#1c2c50"></div>
<div class="cell" style="left:264px;top:356px;width:52px;letter-spacing:-0.25px">000017</div>
<div class="cell" style="left:319px;top:356px;width:357px;font-size:12.57px">ASUS TRANSFORMER BOOK T100TAF</div>
<div class="cell" style="left:680px;top:356px;width:38px">KOM</div>
<div class="cell" style="left:720px;top:356px;width:36px;text-align:center">S1</div>
<div class="cell" style="left:757px;top:356px;width:35px;text-align:right">1</div>
<div style="left:237px;top:392px;width:748px;height:1px;background:#a9a9a9"></div>
<div style="left:240px;top:378px;width:11px;height:11px;border:1px solid #7f92b6;border-radius:2px;background:linear-gradient(#f6f8fc,#bfcde8)"></div>
<div style="left:243px;top:383px;width:5px;height:1px;background:#1c2c50"></div>
<div style="left:245px;top:381px;width:1px;height:5px;background:#1c2c50"></div>
<div class="cell" style="left:264px;top:375px;width:52px;letter-spacing:-0.25px">000018</div>
<div class="cell" style="left:319px;top:375px;width:357px;font-size:12.57px">DELL INSPIRON 15 3542</div>
<div class="cell" style="left:680px;top:375px;width:38px">KOM</div>
<div class="cell" style="left:720px;top:375px;width:36px;text-align:center">S1</div>
<div class="cell" style="left:757px;top:375px;width:35px;text-align:right">1</div>
<div style="left:237px;top:411px;width:748px;height:1px;background:#a9a9a9"></div>
<div style="left:240px;top:397px;width:11px;height:11px;border:1px solid #7f92b6;border-radius:2px;background:linear-gradient(#f6f8fc,#bfcde8)"></div>
<div style="left:243px;top:402px;width:5px;height:1px;background:#1c2c50"></div>
<div style="left:245px;top:400px;width:1px;height:5px;background:#1c2c50"></div>
<div class="cell" style="left:264px;top:394px;width:52px;letter-spacing:-0.25px">000019</div>
<div class="cell" style="left:319px;top:394px;width:357px;font-size:12.57px">MS INDUSTRIAL FOX 2</div>
<div class="cell" style="left:680px;top:394px;width:38px">KOM</div>
<div class="cell" style="left:720px;top:394px;width:36px;text-align:center">S1</div>
<div class="cell" style="left:757px;top:394px;width:35px;text-align:right">1</div>
<div style="left:237px;top:430px;width:748px;height:1px;background:#a9a9a9"></div>
<div style="left:240px;top:416px;width:11px;height:11px;border:1px solid #7f92b6;border-radius:2px;background:linear-gradient(#f6f8fc,#bfcde8)"></div>
<div style="left:243px;top:421px;width:5px;height:1px;background:#1c2c50"></div>
<div style="left:245px;top:419px;width:1px;height:5px;background:#1c2c50"></div>
<div class="cell" style="left:264px;top:413px;width:52px;letter-spacing:-0.25px">000020</div>
<div class="cell" style="left:319px;top:413px;width:357px;font-size:12.57px">LOGITECH K120 USB US</div>
<div class="cell" style="left:680px;top:413px;width:38px">KOM</div>
<div class="cell" style="left:720px;top:413px;width:36px;text-align:center">S1</div>
<div class="cell" style="left:757px;top:413px;width:35px;text-align:right">1</div>
<div style="left:237px;top:449px;width:748px;height:1px;background:#a9a9a9"></div>
<div style="left:240px;top:435px;width:11px;height:11px;border:1px solid #7f92b6;border-radius:2px;background:linear-gradient(#f6f8fc,#bfcde8)"></div>
<div style="left:243px;top:440px;width:5px;height:1px;background:#1c2c50"></div>
<div style="left:245px;top:438px;width:1px;height:5px;background:#1c2c50"></div>
<div class="cell" style="left:264px;top:432px;width:52px;letter-spacing:-0.25px">000021</div>
<div class="cell" style="left:319px;top:432px;width:357px;font-size:12.57px">LOGITECH K400 WIRELESS TOUCH</div>
<div class="cell" style="left:680px;top:432px;width:38px">KOM</div>
<div class="cell" style="left:720px;top:432px;width:36px;text-align:center">S1</div>
<div class="cell" style="left:757px;top:432px;width:35px;text-align:right">1</div>
<div style="left:237px;top:468px;width:748px;height:1px;background:#a9a9a9"></div>
<div style="left:240px;top:454px;width:11px;height:11px;border:1px solid #7f92b6;border-radius:2px;background:linear-gradient(#f6f8fc,#bfcde8)"></div>
<div style="left:243px;top:459px;width:5px;height:1px;background:#1c2c50"></div>
<div style="left:245px;top:457px;width:1px;height:5px;background:#1c2c50"></div>
<div class="cell" style="left:264px;top:451px;width:52px;letter-spacing:-0.25px">000022</div>
<div class="cell" style="left:319px;top:451px;width:357px;font-size:12.57px">OMEGA OPTICAL MOUSE OM-412</div>
<div class="cell" style="left:680px;top:451px;width:38px">KOM</div>
<div class="cell" style="left:720px;top:451px;width:36px;text-align:center">S1</div>
<div class="cell" style="left:757px;top:451px;width:35px;text-align:right">1</div>
<div style="left:237px;top:487px;width:748px;height:1px;background:#a9a9a9"></div>
<div style="left:240px;top:473px;width:11px;height:11px;border:1px solid #7f92b6;border-radius:2px;background:linear-gradient(#f6f8fc,#bfcde8)"></div>
<div style="left:243px;top:478px;width:5px;height:1px;background:#1c2c50"></div>
<div style="left:245px;top:476px;width:1px;height:5px;background:#1c2c50"></div>
<div class="cell" style="left:264px;top:470px;width:52px;letter-spacing:-0.25px">000023</div>
<div class="cell" style="left:319px;top:470px;width:357px;font-size:12.57px">LOGITECH M185 WIRELESS</div>
<div class="cell" style="left:680px;top:470px;width:38px">KOM</div>
<div class="cell" style="left:720px;top:470px;width:36px;text-align:center">S1</div>
<div class="cell" style="left:757px;top:470px;width:35px;text-align:right">1</div>
<div style="left:237px;top:506px;width:748px;height:1px;background:#a9a9a9"></div>
<div style="left:240px;top:492px;width:11px;height:11px;border:1px solid #7f92b6;border-radius:2px;background:linear-gradient(#f6f8fc,#bfcde8)"></div>
<div style="left:243px;top:497px;width:5px;height:1px;background:#1c2c50"></div>
<div style="left:245px;top:495px;width:1px;height:5px;background:#1c2c50"></div>
<div class="cell" style="left:264px;top:489px;width:52px;letter-spacing:-0.25px">000024</div>
<div class="cell" style="left:319px;top:489px;width:357px;font-size:12.57px">LOGITECH WIRELESS MOUSE M325</div>
<div class="cell" style="left:680px;top:489px;width:38px">KOM</div>
<div class="cell" style="left:720px;top:489px;width:36px;text-align:center">S1</div>
<div class="cell" style="left:757px;top:489px;width:35px;text-align:right">1</div>
<div style="left:237px;top:525px;width:748px;height:1px;background:#a9a9a9"></div>
<div style="left:240px;top:511px;width:11px;height:11px;border:1px solid #7f92b6;border-radius:2px;background:linear-gradient(#f6f8fc,#bfcde8)"></div>
<div style="left:243px;top:516px;width:5px;height:1px;background:#1c2c50"></div>
<div style="left:245px;top:514px;width:1px;height:5px;background:#1c2c50"></div>
<div class="cell" style="left:264px;top:508px;width:52px;letter-spacing:-0.25px">000025</div>
<div class="cell" style="left:319px;top:508px;width:357px;font-size:12.57px">TRACER 2.1 TUMBA BLUETOOTH</div>
<div class="cell" style="left:680px;top:508px;width:38px">KOM</div>
<div class="cell" style="left:720px;top:508px;width:36px;text-align:center">S1</div>
<div class="cell" style="left:757px;top:508px;width:35px;text-align:right">1</div>
<div style="left:237px;top:544px;width:748px;height:1px;background:#a9a9a9"></div>
<div style="left:240px;top:530px;width:11px;height:11px;border:1px solid #7f92b6;border-radius:2px;background:linear-gradient(#f6f8fc,#bfcde8)"></div>
<div style="left:243px;top:535px;width:5px;height:1px;background:#1c2c50"></div>
<div style="left:245px;top:533px;width:1px;height:5px;background:#1c2c50"></div>
<div class="cell" style="left:264px;top:527px;width:52px;letter-spacing:-0.25px">000026</div>
<div class="cell" style="left:319px;top:527px;width:357px;font-size:12.57px">GENIUS SP-HF 1250B</div>
<div class="cell" style="left:680px;top:527px;width:38px">KOM</div>
<div class="cell" style="left:720px;top:527px;width:36px;text-align:center">S1</div>
<div class="cell" style="left:757px;top:527px;width:35px;text-align:right">1</div>
<div style="left:237px;top:563px;width:748px;height:1px;background:#a9a9a9"></div>
<div style="left:240px;top:549px;width:11px;height:11px;border:1px solid #7f92b6;border-radius:2px;background:linear-gradient(#f6f8fc,#bfcde8)"></div>
<div style="left:243px;top:554px;width:5px;height:1px;background:#1c2c50"></div>
<div style="left:245px;top:552px;width:1px;height:5px;background:#1c2c50"></div>
<div class="cell" style="left:264px;top:546px;width:52px;letter-spacing:-0.25px">000027</div>
<div class="cell" style="left:319px;top:546px;width:357px;font-size:12.57px">M4U XT - A CONTROLLER</div>
<div class="cell" style="left:680px;top:546px;width:38px">KOM</div>
<div class="cell" style="left:720px;top:546px;width:36px;text-align:center">S1</div>
<div class="cell" style="left:757px;top:546px;width:35px;text-align:right">1</div>
<div style="left:237px;top:582px;width:748px;height:1px;background:#a9a9a9"></div>
<div style="left:240px;top:568px;width:11px;height:11px;border:1px solid #7f92b6;border-radius:2px;background:linear-gradient(#f6f8fc,#bfcde8)"></div>
<div style="left:243px;top:573px;width:5px;height:1px;background:#1c2c50"></div>
<div style="left:245px;top:571px;width:1px;height:5px;background:#1c2c50"></div>
<div class="cell" style="left:264px;top:565px;width:52px;letter-spacing:-0.25px">000028</div>
<div class="cell" style="left:319px;top:565px;width:357px;font-size:12.57px">ESI U24 XL MOBILE</div>
<div class="cell" style="left:680px;top:565px;width:38px">KOM</div>
<div class="cell" style="left:720px;top:565px;width:36px;text-align:center">S1</div>
<div class="cell" style="left:757px;top:565px;width:35px;text-align:right">1</div>
<div style="left:237px;top:601px;width:748px;height:1px;background:#a9a9a9"></div>
<div style="left:240px;top:587px;width:11px;height:11px;border:1px solid #7f92b6;border-radius:2px;background:linear-gradient(#f6f8fc,#bfcde8)"></div>
<div style="left:243px;top:592px;width:5px;height:1px;background:#1c2c50"></div>
<div style="left:245px;top:590px;width:1px;height:5px;background:#1c2c50"></div>
<div class="cell" style="left:264px;top:584px;width:52px;letter-spacing:-0.25px">000029</div>
<div class="cell" style="left:319px;top:584px;width:357px;font-size:12.57px">ANTELOPE ZEN STUDIO</div>
<div class="cell" style="left:680px;top:584px;width:38px">KOM</div>
<div class="cell" style="left:720px;top:584px;width:36px;text-align:center">S1</div>
<div class="cell" style="left:757px;top:584px;width:35px;text-align:right">1</div>
<div style="left:237px;top:620px;width:748px;height:1px;background:#a9a9a9"></div>
<div style="left:240px;top:606px;width:11px;height:11px;border:1px solid #7f92b6;border-radius:2px;background:linear-gradient(#f6f8fc,#bfcde8)"></div>
<div style="left:243px;top:611px;width:5px;height:1px;background:#1c2c50"></div>
<div style="left:245px;top:609px;width:1px;height:5px;background:#1c2c50"></div>
<div class="cell" style="left:264px;top:603px;width:52px;letter-spacing:-0.25px">000030</div>
<div class="cell" style="left:319px;top:603px;width:357px;font-size:12.57px">BEHRINGER BEHRITONE C50A</div>
<div class="cell" style="left:680px;top:603px;width:38px">KOM</div>
<div class="cell" style="left:720px;top:603px;width:36px;text-align:center">S1</div>
<div class="cell" style="left:757px;top:603px;width:35px;text-align:right">1</div>
<div style="left:237px;top:639px;width:748px;height:1px;background:#a9a9a9"></div>
<div style="left:240px;top:625px;width:11px;height:11px;border:1px solid #7f92b6;border-radius:2px;background:linear-gradient(#f6f8fc,#bfcde8)"></div>
<div style="left:243px;top:630px;width:5px;height:1px;background:#1c2c50"></div>
<div style="left:245px;top:628px;width:1px;height:5px;background:#1c2c50"></div>
<div class="cell" style="left:264px;top:622px;width:52px;letter-spacing:-0.25px">000031</div>
<div class="cell" style="left:319px;top:622px;width:357px;font-size:12.57px">BEYERDYNAMIC CUSTOM ONE PRO</div>
<div class="cell" style="left:680px;top:622px;width:38px">KOM</div>
<div class="cell" style="left:720px;top:622px;width:36px;text-align:center">S1</div>
<div class="cell" style="left:757px;top:622px;width:35px;text-align:right">1</div>
<div style="left:237px;top:658px;width:748px;height:1px;background:#a9a9a9"></div>
<div style="left:240px;top:644px;width:11px;height:11px;border:1px solid #7f92b6;border-radius:2px;background:linear-gradient(#f6f8fc,#bfcde8)"></div>
<div style="left:243px;top:649px;width:5px;height:1px;background:#1c2c50"></div>
<div style="left:245px;top:647px;width:1px;height:5px;background:#1c2c50"></div>
<div class="cell" style="left:264px;top:641px;width:52px;letter-spacing:-0.25px">000032</div>
<div class="cell" style="left:319px;top:641px;width:357px;font-size:12.57px">SUPERLUX HD662F</div>
<div class="cell" style="left:680px;top:641px;width:38px">KOM</div>
<div class="cell" style="left:720px;top:641px;width:36px;text-align:center">S1</div>
<div class="cell" style="left:757px;top:641px;width:35px;text-align:right">1</div>
<div style="left:237px;top:677px;width:748px;height:1px;background:#a9a9a9"></div>
<div style="left:240px;top:663px;width:11px;height:11px;border:1px solid #7f92b6;border-radius:2px;background:linear-gradient(#f6f8fc,#bfcde8)"></div>
<div style="left:243px;top:668px;width:5px;height:1px;background:#1c2c50"></div>
<div style="left:245px;top:666px;width:1px;height:5px;background:#1c2c50"></div>
<div class="cell" style="left:264px;top:660px;width:52px;letter-spacing:-0.25px">000033</div>
<div class="cell" style="left:319px;top:660px;width:357px;font-size:12.57px">SENNHEISER IE4</div>
<div class="cell" style="left:680px;top:660px;width:38px">KOM</div>
<div class="cell" style="left:720px;top:660px;width:36px;text-align:center">S1</div>
<div class="cell" style="left:757px;top:660px;width:35px;text-align:right">1</div>
<div style="left:237px;top:696px;width:748px;height:1px;background:#a9a9a9"></div>
<div style="left:240px;top:682px;width:11px;height:11px;border:1px solid #7f92b6;border-radius:2px;background:linear-gradient(#f6f8fc,#bfcde8)"></div>
<div style="left:243px;top:687px;width:5px;height:1px;background:#1c2c50"></div>
<div style="left:245px;top:685px;width:1px;height:5px;background:#1c2c50"></div>
<div class="cell" style="left:264px;top:679px;width:52px;letter-spacing:-0.25px">000034</div>
<div class="cell" style="left:319px;top:679px;width:357px;font-size:12.57px">SAMSUNG 500GB 2.5", USB 3.0, M3 PORTABLE - STSHX-M500TCB</div>
<div class="cell" style="left:680px;top:679px;width:38px">KOM</div>
<div class="cell" style="left:720px;top:679px;width:36px;text-align:center">S1</div>
<div class="cell" style="left:757px;top:679px;width:35px;text-align:right">1</div>
<div style="left:237px;top:715px;width:748px;height:1px;background:#a9a9a9"></div>
<div style="left:240px;top:701px;width:11px;height:11px;border:1px solid #7f92b6;border-radius:2px;background:linear-gradient(#f6f8fc,#bfcde8)"></div>
<div style="left:243px;top:706px;width:5px;height:1px;background:#1c2c50"></div>
<div style="left:245px;top:704px;width:1px;height:5px;background:#1c2c50"></div>
<div class="cell" style="left:264px;top:698px;width:52px;letter-spacing:-0.25px">000035</div>
<div class="cell" style="left:319px;top:698px;width:357px;font-size:12.57px;letter-spacing:0.12px">WD 4TB 3.5", GIGABIT ETHERNET, USB 3.0, MY CLOUD (WHITE)</div>
<div class="cell" style="left:680px;top:698px;width:38px">KOM</div>
<div class="cell" style="left:720px;top:698px;width:36px;text-align:center">S1</div>
<div class="cell" style="left:757px;top:698px;width:35px;text-align:right">1</div>
<div style="left:237px;top:734px;width:748px;height:1px;background:#a9a9a9"></div>
<div style="left:240px;top:720px;width:11px;height:11px;border:1px solid #7f92b6;border-radius:2px;background:linear-gradient(#f6f8fc,#bfcde8)"></div>
<div style="left:243px;top:725px;width:5px;height:1px;background:#1c2c50"></div>
<div style="left:245px;top:723px;width:1px;height:5px;background:#1c2c50"></div>
<div class="cell" style="left:264px;top:717px;width:52px;letter-spacing:-0.25px">000036</div>
<div class="cell" style="left:319px;top:717px;width:357px;font-size:12.57px">LACIE 4TB BLADE RUNNER - 9000119</div>
<div class="cell" style="left:680px;top:717px;width:38px">KOM</div>
<div class="cell" style="left:720px;top:717px;width:36px;text-align:center">S1</div>
<div class="cell" style="left:757px;top:717px;width:35px;text-align:right">1</div>
<div style="left:1010px;top:86px;width:17px;height:651px;background:#f0f0f0"></div>
<div style="left:1010px;top:103px;width:16px;height:257px;background:#c9c9c9"></div>
<svg style="left:1014px;top:91px" width="9" height="7"><path d="M1 5.6L4.5 2L8 5.6" stroke="#505050" stroke-width="2.1" fill="none"/></svg>
<svg style="left:1014px;top:724px" width="9" height="7"><path d="M1 1.4L4.5 5L8 1.4" stroke="#505050" stroke-width="2.1" fill="none"/></svg>
<div style="left:237px;top:736px;width:790px;height:19px;background:#f0f0f0"></div>
<div style="left:237px;top:736px;width:320px;height:19px;background:#fff"></div>
<svg style="left:661px;top:741px" width="6" height="9"><path d="M5 .8L1.2 4.5L5 8.2" stroke="#b8b8b8" stroke-width="1.5" fill="none"/></svg>
<svg style="left:997px;top:741px" width="6" height="9"><path d="M1 .8L4.8 4.5L1 8.2" stroke="#b8b8b8" stroke-width="1.5" fill="none"/></svg>
<div class="nb" style="left:238px;top:737px;width:15px;height:17px;"></div>
<svg style="left:239.5px;top:740.5px" width="12" height="10.8" viewBox="0 0 10 9"><rect x="0" y="1" width="1.4" height="7" fill="#1c2a58"/><path d="M5.6 1L1.6 4.5L5.6 8Z" fill="#1c2a58"/><path d="M9.6 1L5.6 4.5L9.6 8Z" fill="#1c2a58"/></svg>
<div class="nb" style="left:255px;top:737px;width:15px;height:17px;"></div>
<svg style="left:256.5px;top:740.5px" width="12" height="10.8" viewBox="0 0 10 9"><path d="M4.5 1L0.5 4.5L4.5 8Z" fill="#1c2a58"/><path d="M9 1L5 4.5L9 8Z" fill="#1c2a58"/></svg>
<div class="nb" style="left:272px;top:737px;width:15px;height:17px;"></div>
<svg style="left:273.5px;top:740.5px" width="12" height="10.8" viewBox="0 0 10 9"><path d="M7 1L3 4.5L7 8Z" fill="#1c2a58"/></svg>
<div class="t" style="left:295px;top:738px;font-size:12.6px">10 od 79</div>
<div class="nb" style="left:354px;top:737px;width:15px;height:17px;"></div>
<svg style="left:355.5px;top:740.5px" width="12" height="10.8" viewBox="0 0 10 9"><path d="M3 1L7 4.5L3 8Z" fill="#1c2a58"/></svg>
<div class="nb" style="left:371px;top:737px;width:15px;height:17px;"></div>
<svg style="left:372.5px;top:740.5px" width="12" height="10.8" viewBox="0 0 10 9"><path d="M0.5 1L4.5 4.5L0.5 8Z" fill="#1c2a58"/><path d="M5 1L9 4.5L5 8Z" fill="#1c2a58"/></svg>
<div class="nb" style="left:388px;top:737px;width:15px;height:17px;"></div>
<svg style="left:389.5px;top:740.5px" width="12" height="10.8" viewBox="0 0 10 9"><path d="M0 1L4 4.5L0 8Z" fill="#1c2a58"/><path d="M4 1L8 4.5L4 8Z" fill="#1c2a58"/><rect x="8.2" y="1" width="1.4" height="7" fill="#1c2a58"/></svg>
<div class="nb" style="left:405px;top:737px;width:15px;height:17px;"></div>
<svg style="left:406.5px;top:740.5px" width="12" height="10.8" viewBox="0 0 10 9"><path d="M1 4.5H9M5 .5V8.5" stroke="#2a9a1a" stroke-width="2"/></svg>
<div class="nb" style="left:422px;top:737px;width:15px;height:17px;"></div>
<svg style="left:423.5px;top:740.5px" width="12" height="10.8" viewBox="0 0 10 9"><path d="M1 4.5H9" stroke="#d02020" stroke-width="2"/></svg>
<div class="nb" style="left:439px;top:737px;width:15px;height:17px;"></div>
<svg style="left:440.5px;top:740.5px" width="12" height="10.8" viewBox="0 0 10 9"><path d="M1.5 7L5 2L8.5 7Z" fill="#1c2a58"/></svg>
<div class="nbd" style="left:456px;top:737px;width:15px;height:17px;"></div>
<svg style="left:457.5px;top:740.5px" width="12" height="10.8" viewBox="0 0 10 9"><path d="M1 4.5L4 7.5L9 1.5" stroke="#b4b4b4" stroke-width="1.8" fill="none"/></svg>
<div class="nbd" style="left:473px;top:737px;width:15px;height:17px;"></div>
<svg style="left:474.5px;top:740.5px" width="12" height="10.8" viewBox="0 0 10 9"><path d="M1.5 1L8.5 8M8.5 1L1.5 8" stroke="#b4b4b4" stroke-width="1.8" fill="none"/></svg>
<div class="nb" style="left:490px;top:737px;width:15px;height:17px;"></div>
<svg style="left:491.5px;top:740.5px" width="12" height="10.8" viewBox="0 0 10 9"><path d="M1.4 6.2Q1.8 2.2 5.4 2.4Q7.8 2.8 7.9 5" stroke="#1c2a58" stroke-width="1.5" fill="none"/><path d="M5.2 4.6L10 4.4L8.4 8.6Z" fill="#1c2a58"/></svg>
<div class="nb" style="left:507px;top:737px;width:15px;height:17px;"></div>
<svg style="left:508.5px;top:740.5px" width="12" height="10.8" viewBox="0 0 10 9"><path d="M5 .4V8.6M.8 4.5H9.2M2 1.5L8 7.5M8 1.5L2 7.5" stroke="#000" stroke-width="1"/></svg>
<div class="nbd" style="left:524px;top:737px;width:15px;height:17px;"></div>
<svg style="left:525.5px;top:740.5px" width="12" height="10.8" viewBox="0 0 10 9"><path d="M0 1L3 3.5L0 6Z" fill="#909090"/><path d="M6.5 1.5V9M3 5.2H10M4 2.6L9 7.8M9 2.6L4 7.8" stroke="#a0a0a0" stroke-width="1"/></svg>
<div class="nbd" style="left:541px;top:737px;width:15px;height:17px;"></div>
<svg style="left:542.5px;top:740.5px" width="12" height="10.8" viewBox="0 0 10 9"><path d="M1.5 1.5H8.5L5.8 4.6V8H4.2V4.6Z" fill="#b4b4b4"/></svg>
<div style="left:1030px;top:88px;width:26px;height:664px;border:1px solid #2a4cae;background:#b0cbf3"></div>
<div style="left:1030px;top:88px;width:26px;height:24px;border:1px solid #2a4cae;background:linear-gradient(#4a78cc 0%,#2452b2 45%,#1b429e 60%,#2350ae 100%)"></div>
<svg style="left:1039px;top:96px" width="9" height="8"><path d="M4 .5L1 4L4 7.5M8 .5L5 4L8 7.5" stroke="#fff" stroke-width="1.4" fill="none"/></svg>
<div style="left:1043px;top:433px;width:0;height:0"><div style="left:-70px;top:-8px;width:140px;height:16px;line-height:16px;text-align:center;transform:rotate(-90deg);font-weight:bold;font-size:12.4px;color:#10309c">PODACI O ARTIKLU</div></div>
<div class="pan" style="left:237px;top:757px;width:140px;height:28px;"></div>
<div class="t" style="left:241px;top:764px;font-size:11.3px">Prikaži:</div>
<div style="left:280px;top:761px;width:93px;height:21px;background:#f3f3f3;border:1px solid #a9b3c4;border-right-color:#dfe6f2;border-bottom-color:#dfe6f2"></div>
<div class="t" style="left:283px;top:764px;font-size:11.7px">Sve artikle</div>
<div style="left:356px;top:762px;width:16px;height:19px;background:#9fbcf0"></div>
<svg style="left:359px;top:769px" width="10" height="6"><path d="M0 0H10L5 6Z" fill="#000"/></svg>
<div class="pan" style="left:379px;top:757px;width:57px;height:28px;"></div>
<div class="t" style="left:383px;top:763px;width:50px;overflow:hidden;font-size:11.2px">PRIKAZ: F9</div>
<div class="pan" style="left:438px;top:757px;width:82px;height:28px;"></div>
<div class="t" style="left:443px;top:763px;font-size:11.9px">Rez.:</div>
<div class="pan" style="left:523px;top:757px;width:100px;height:28px;"></div>
<div class="t" style="left:528px;top:763px;font-size:11.9px">FKC:</div>
<div class="pan" style="left:626px;top:757px;width:102px;height:28px;"></div>
<div class="t" style="left:631px;top:763px;font-size:11.9px">NBC:</div>
<div class="pan" style="left:730px;top:757px;width:102px;height:28px;"></div>
<div class="t" style="left:735px;top:763px;font-size:11.9px">VPC:</div>
<div style="left:763px;top:763px;width:64px;height:14px;background:#c4c4c4"></div>
<div class="pan" style="left:834px;top:757px;width:102px;height:28px;"></div>
<div class="t" style="left:839px;top:763px;font-size:11.9px">MPC:</div>
<div class="pan" style="left:938px;top:757px;width:121px;height:28px;"></div>
<div class="t" style="left:943px;top:763px;font-size:11.9px">CENA:</div>
<div class="pan" style="left:237px;top:787px;width:102px;height:28px;"></div>
<div style="left:243px;top:795px;width:12px;height:12px;background:#fff;border:1px solid #333"></div>
<div class="t" style="left:258px;top:794px;font-size:12.1px">F2 - IZMENE</div>
<div class="pan" style="left:341px;top:787px;width:122px;height:28px;"></div>
<div class="t" style="left:341px;top:794px;width:122px;text-align:center;font-size:11.2px">F5 - NOVI ARTIKAL</div>
<div class="pan" style="left:465px;top:787px;width:452px;height:28px;"></div>
<div class="t" style="left:468px;top:794px;width:447px;overflow:hidden;font-size:11.2px">PRETRAGA ( Ctrl+f ), F1 - PO ŠIFRI, F7 - PO NAZIVU, F10 - PO ATRIBUTU, F3 - PO KAT.BR.,</div>
<div class="pan" style="left:919px;top:787px;width:67px;height:28px;"></div>
<div style="left:921px;top:789px;width:63px;height:24px;background:linear-gradient(#f1f1f1,#e3e3e3);border:1px solid #b9bcc4;border-top-color:#f6f6f6;border-left-color:#f6f6f6;border-radius:1px;text-align:center;line-height:22px;font-size:12.6px"><u>K</u>artica</div>
<div class="pan" style="left:988px;top:787px;width:71px;height:28px;"></div>
<div style="left:990px;top:789px;width:68px;height:24px;background:linear-gradient(#f1f1f1,#e3e3e3);border:1px solid #b9bcc4;border-top-color:#f6f6f6;border-left-color:#f6f6f6;border-radius:1px;text-align:center;line-height:22px;font-size:12.6px">OK / Upiši</div>
<div style="left:1064px;top:57px;width:50px;height:761px;border:1px solid #0c0c58;background:#b0cbf3"></div>
<div style="left:1096px;top:58px;width:17px;height:759px;background:#f0f0f0"></div>
<div style="left:1097px;top:151px;width:15px;height:498px;background:#c9c9c9"></div>
<svg style="left:1100px;top:64px" width="9" height="7"><path d="M1 5.6L4.5 2L8 5.6" stroke="#505050" stroke-width="2.1" fill="none"/></svg>
<svg style="left:1100px;top:805px" width="9" height="7"><path d="M1 1.4L4.5 5L8 1.4" stroke="#505050" stroke-width="2.1" fill="none"/></svg>
<div style="left:1065px;top:90px;width:31px;height:1px;background:#9aa4b4"></div>
<div style="left:1070px;top:112px;width:26px;height:1px;background:#9aa4b4"></div>
<div style="left:1091px;top:134px;width:5px;height:1px;background:#9aa4b4"></div>
<div class="t" style="left:1072px;top:116px;font-size:16px;line-height:20px;height:20px;color:#111">03</div>
<div style="left:1092px;top:118px;width:3px;height:12px;overflow:hidden;font-size:7.5px;line-height:12px;color:#222">00</div>
<div style="left:1070px;top:156px;width:26px;height:1px;background:#9aa4b4"></div>
<div style="left:1091px;top:178px;width:5px;height:1px;background:#9aa4b4"></div>
<div class="t" style="left:1072px;top:160px;font-size:16px;line-height:20px;height:20px;color:#111">04</div>
<div style="left:1092px;top:162px;width:3px;height:12px;overflow:hidden;font-size:7.5px;line-height:12px;color:#222">00</div>
<div style="left:1070px;top:200px;width:26px;height:1px;background:#9aa4b4"></div>
<div style="left:1091px;top:222px;width:5px;height:1px;background:#9aa4b4"></div>
<div class="t" style="left:1072px;top:204px;font-size:16px;line-height:20px;height:20px;color:#111">05</div>
<div style="left:1092px;top:206px;width:3px;height:12px;overflow:hidden;font-size:7.5px;line-height:12px;color:#222">00</div>
<div style="left:1070px;top:244px;width:26px;height:1px;background:#9aa4b4"></div>
<div style="left:1091px;top:266px;width:5px;height:1px;background:#9aa4b4"></div>
<div class="t" style="left:1072px;top:248px;font-size:16px;line-height:20px;height:20px;color:#111">06</div>
<div style="left:1092px;top:250px;width:3px;height:12px;overflow:hidden;font-size:7.5px;line-height:12px;color:#222">00</div>
<div style="left:1070px;top:288px;width:26px;height:1px;background:#9aa4b4"></div>
<div style="left:1091px;top:310px;width:5px;height:1px;background:#9aa4b4"></div>
<div class="t" style="left:1072px;top:292px;font-size:16px;line-height:20px;height:20px;color:#111">07</div>
<div style="left:1092px;top:294px;width:3px;height:12px;overflow:hidden;font-size:7.5px;line-height:12px;color:#222">00</div>
<div style="left:1070px;top:332px;width:26px;height:1px;background:#9aa4b4"></div>
<div style="left:1091px;top:354px;width:5px;height:1px;background:#9aa4b4"></div>
<div class="t" style="left:1072px;top:336px;font-size:16px;line-height:20px;height:20px;color:#111">08</div>
<div style="left:1092px;top:338px;width:3px;height:12px;overflow:hidden;font-size:7.5px;line-height:12px;color:#222">00</div>
<div style="left:1070px;top:376px;width:26px;height:1px;background:#9aa4b4"></div>
<div style="left:1091px;top:398px;width:5px;height:1px;background:#9aa4b4"></div>
<div class="t" style="left:1072px;top:380px;font-size:16px;line-height:20px;height:20px;color:#111">09</div>
<div style="left:1092px;top:382px;width:3px;height:12px;overflow:hidden;font-size:7.5px;line-height:12px;color:#222">00</div>
<div style="left:1070px;top:420px;width:26px;height:1px;background:#9aa4b4"></div>
<div style="left:1091px;top:442px;width:5px;height:1px;background:#9aa4b4"></div>
<div class="t" style="left:1072px;top:424px;font-size:16px;line-height:20px;height:20px;color:#111">10</div>
<div style="left:1092px;top:426px;width:3px;height:12px;overflow:hidden;font-size:7.5px;line-height:12px;color:#222">00</div>
<div style="left:1070px;top:464px;width:26px;height:1px;background:#9aa4b4"></div>
<div style="left:1091px;top:486px;width:5px;height:1px;background:#9aa4b4"></div>
<div class="t" style="left:1072px;top:468px;font-size:16px;line-height:20px;height:20px;color:#111">11</div>
<div style="left:1092px;top:470px;width:3px;height:12px;overflow:hidden;font-size:7.5px;line-height:12px;color:#222">00</div>
<div style="left:1070px;top:508px;width:26px;height:1px;background:#9aa4b4"></div>
<div style="left:1091px;top:530px;width:5px;height:1px;background:#9aa4b4"></div>
<div class="t" style="left:1072px;top:512px;font-size:16px;line-height:20px;height:20px;color:#111">12</div>
<div style="left:1092px;top:514px;width:3px;height:12px;overflow:hidden;font-size:7.5px;line-height:12px;color:#222">00</div>
<div style="left:1070px;top:552px;width:26px;height:1px;background:#9aa4b4"></div>
<div style="left:1091px;top:574px;width:5px;height:1px;background:#9aa4b4"></div>
<div class="t" style="left:1072px;top:556px;font-size:16px;line-height:20px;height:20px;color:#111">13</div>
<div style="left:1092px;top:558px;width:3px;height:12px;overflow:hidden;font-size:7.5px;line-height:12px;color:#222">00</div>
<div style="left:1070px;top:596px;width:26px;height:1px;background:#9aa4b4"></div>
<div style="left:1091px;top:618px;width:5px;height:1px;background:#9aa4b4"></div>
<div class="t" style="left:1072px;top:600px;font-size:16px;line-height:20px;height:20px;color:#111">14</div>
<div style="left:1092px;top:602px;width:3px;height:12px;overflow:hidden;font-size:7.5px;line-height:12px;color:#222">00</div>
<div style="left:1070px;top:640px;width:26px;height:1px;background:#9aa4b4"></div>
<div style="left:1091px;top:662px;width:5px;height:1px;background:#9aa4b4"></div>
<div class="t" style="left:1072px;top:644px;font-size:16px;line-height:20px;height:20px;color:#111">15</div>
<div style="left:1092px;top:646px;width:3px;height:12px;overflow:hidden;font-size:7.5px;line-height:12px;color:#222">00</div>
<div style="left:1070px;top:684px;width:26px;height:1px;background:#9aa4b4"></div>
<div style="left:1091px;top:706px;width:5px;height:1px;background:#9aa4b4"></div>
<div class="t" style="left:1072px;top:688px;font-size:16px;line-height:20px;height:20px;color:#111">16</div>
<div style="left:1092px;top:690px;width:3px;height:12px;overflow:hidden;font-size:7.5px;line-height:12px;color:#222">00</div>
<div style="left:1070px;top:728px;width:26px;height:1px;background:#9aa4b4"></div>
<div style="left:1091px;top:750px;width:5px;height:1px;background:#9aa4b4"></div>
<div class="t" style="left:1072px;top:732px;font-size:16px;line-height:20px;height:20px;color:#111">17</div>
<div style="left:1092px;top:734px;width:3px;height:12px;overflow:hidden;font-size:7.5px;line-height:12px;color:#222">00</div>
<div style="left:1070px;top:772px;width:26px;height:1px;background:#9aa4b4"></div>
<div style="left:1091px;top:794px;width:5px;height:1px;background:#9aa4b4"></div>
<div class="t" style="left:1072px;top:776px;font-size:16px;line-height:20px;height:20px;color:#111">18</div>
<div style="left:1092px;top:778px;width:3px;height:12px;overflow:hidden;font-size:7.5px;line-height:12px;color:#222">00</div>
<div style="left:1065px;top:675px;width:31px;height:1px;background:#f0b488"></div>
<div style="left:1065px;top:676px;width:31px;height:1px;background:#f6dccc"></div>
<div style="left:5px;top:818px;width:1109px;height:1px;background:#e6eefc"></div>
<div style="left:5px;top:819px;width:1109px;height:23px;background:linear-gradient(#dce8fb 0%,#c4d7f7 40%,#9fbbec 100%);border-top:1px solid #e8f0fc;border-bottom:1px solid #8eade2"></div>
<div class="t" style="left:9px;top:823px;font-weight:bold;font-size:12px">222 - EXPERIMENT DOO</div>
<div class="t" style="left:170px;top:823px;font-weight:bold;font-size:12px">BEOGRAD</div>
<div class="t" style="left:241px;top:823px;font-weight:bold;font-size:12px">KRUNSKA 33</div>
<div class="t" style="left:335px;top:823px;font-weight:bold;font-size:12px;letter-spacing:0.4px">124455667</div>
<div class="t" style="left:423px;top:823px;font-weight:bold;font-size:12px;letter-spacing:0.45px">170-30020302201-77</div>
<div style="left:618px;top:821px;width:1px;height:19px;background:#7f9fd8"></div>
<div style="left:619px;top:821px;width:1px;height:19px;background:#eaf1fd"></div>
<div class="t" style="left:624px;top:823px;font-weight:bold;font-size:12px;color:#7a0f12;letter-spacing:0.23px">001 - VELEPRODAJA BR.1</div>
<div style="left:975px;top:820px;width:30px;height:21px;border:1px solid #86a4d8;border-right-color:#cfdff9;text-align:center;line-height:18px;font-size:10.5px;color:#9aa4b6">CAPS</div>
<div style="left:1007px;top:820px;width:29px;height:21px;border:1px solid #86a4d8;border-right-color:#cfdff9;text-align:center;line-height:18px;font-size:10.5px;color:#000">NUM</div>
<div style="left:1038px;top:820px;width:31px;height:21px;border:1px solid #86a4d8;border-right-color:#cfdff9;text-align:center;line-height:18px;font-size:10.5px;color:#9aa4b6">SCRL</div>
<div style="left:1072px;top:820px;width:27px;height:21px;border:1px solid #86a4d8;border-right-color:#cfdff9;text-align:center;line-height:18px;font-size:10.5px;color:#9aa4b6">INS</div>
<svg style="left:1101px;top:829px" width="12" height="12"><g fill="#fff"><rect x="9" y="1" width="2" height="2"/><rect x="5" y="5" width="2" height="2"/><rect x="9" y="5" width="2" height="2"/><rect x="1" y="9" width="2" height="2"/><rect x="5" y="9" width="2" height="2"/><rect x="9" y="9" width="2" height="2"/></g><g fill="#1c2c60"><rect x="8" y="0" width="2" height="2"/><rect x="4" y="4" width="2" height="2"/><rect x="8" y="4" width="2" height="2"/><rect x="0" y="8" width="2" height="2"/><rect x="4" y="8" width="2" height="2"/><rect x="8" y="8" width="2" height="2"/></g></svg>
<div style="left:387px;top:325px;width:579px;height:258px;background:#3b6dbc;border:1px solid #3463ae"></div>
<div style="left:397px;top:332px;width:16px;height:16px;background:#1b78a6;border:1px solid #a8d0e8;color:#fff;font-weight:bold;font-size:9.3px;line-height:14px;padding-top:1px;text-align:center;letter-spacing:-0.5px;text-indent:-0.5px;overflow:hidden;font-family:'Liberation Sans',sans-serif">BS</div>
<div style="left:387px;top:331px;width:579px;height:20px;line-height:20px;text-align:center;font-size:14.6px;color:#1a2c52">Pretraga izabrane tabele</div>
<div style="left:870px;top:338px;width:8px;height:2px;background:#16264c"></div>
<div style="left:896px;top:332px;width:10px;height:8px;border:1px solid #16264c;border-top-width:2px"></div>
<div style="left:914px;top:326px;width:45px;height:20px;background:#d04f4d"></div>
<svg style="left:932px;top:332px" width="9" height="9"><path d="M.7 .7L8.3 8.3M8.3 .7L.7 8.3" stroke="#fff" stroke-width="1.5" fill="none"/></svg>
<div style="left:395px;top:356px;width:563px;height:220px;background:#a9c8f1;border-top:1px solid #2a56a6;border-left:1px solid #2f5eb0"></div>
<div style="left:409px;top:371px;width:346px;height:20px;background:#fff;border:1px solid #8e98a8"></div>
<div style="left:760px;top:369px;width:60px;height:24px;background:#9dbdf2;border:1px solid #101018;text-align:center;line-height:23px;font-size:12.6px">Pronađi</div>
<div style="left:824px;top:369px;width:60px;height:24px;background:#9dbdf2;border:1px solid #101018;text-align:center;line-height:23px;font-size:12.6px">Obriši</div>
<div style="left:940px;top:357px;width:17px;height:169px;background:#f0f0f0"></div>
<div style="left:941px;top:374px;width:15px;height:16px;background:#c9c9c9"></div>
<svg style="left:944px;top:362px" width="9" height="7"><path d="M1 5.6L4.5 2L8 5.6" stroke="#505050" stroke-width="2.1" fill="none"/></svg>
<svg style="left:944px;top:513px" width="9" height="7"><path d="M1 1.4L4.5 5L8 1.4" stroke="#505050" stroke-width="2.1" fill="none"/></svg>
<div style="left:396px;top:404px;width:544px;height:1px;background:#7fa2dc"></div>
<div style="left:396px;top:405px;width:544px;height:22px;background:linear-gradient(#b4cdf4,#a6c3ef);border-bottom:1px solid #8eaee4"></div>
<div class="t" style="left:399px;top:409px;font-size:12.6px">Šifra</div>
<div style="left:458px;top:407px;width:1px;height:18px;background:#eef4fd"></div>
<div class="t" style="left:462px;top:409px;font-size:11px;color:#7a0f12">Naziv artikla</div>
<div style="left:819px;top:407px;width:1px;height:18px;background:#eef4fd"></div>
<div class="t" style="left:823px;top:409px;font-size:12.6px">JMR</div>
<div style="left:861px;top:407px;width:1px;height:18px;background:#eef4fd"></div>
<div class="t" style="left:865px;top:409px;font-size:12.6px">Por<span style="letter-spacing:0.9px">...</span></div>
<div style="left:898px;top:407px;width:1px;height:18px;background:#eef4fd"></div>
<div class="t" style="left:902px;top:409px;font-size:12.6px">Tar<span style="letter-spacing:0.9px">...</span></div>
<div style="left:937px;top:407px;width:1px;height:18px;background:#eef4fd"></div>
<div style="left:396px;top:427px;width:544px;height:99px;background:#fff"></div>
<div style="left:458px;top:427px;width:1px;height:99px;background:#a9a9a9"></div>
<div style="left:819px;top:427px;width:1px;height:99px;background:#a9a9a9"></div>
<div style="left:861px;top:427px;width:1px;height:99px;background:#a9a9a9"></div>
<div style="left:898px;top:427px;width:1px;height:99px;background:#a9a9a9"></div>
<div style="left:937px;top:427px;width:1px;height:99px;background:#a9a9a9"></div>
<div style="left:396px;top:445px;width:542px;height:1px;background:#a9a9a9"></div>
<div class="cell" style="left:406px;top:428px;width:50px;letter-spacing:-0.25px">000001</div>
<div class="cell r" style="left:461px;top:428px;width:357px;font-size:11px">ARTIKAL 1</div>
<div class="cell" style="left:822px;top:428px;width:38px">KOM</div>
<div class="cell" style="left:862px;top:428px;width:36px;text-align:center">S1</div>
<div class="cell" style="left:899px;top:428px;width:35px;text-align:right">1</div>
<div style="left:396px;top:464px;width:542px;height:1px;background:#a9a9a9"></div>
<div class="cell" style="left:406px;top:447px;width:50px;letter-spacing:-0.25px">000002</div>
<div class="cell r" style="left:461px;top:447px;width:357px;font-size:11px">ARTIKAL 2</div>
<div class="cell" style="left:822px;top:447px;width:38px">KOM</div>
<div class="cell" style="left:862px;top:447px;width:36px;text-align:center">S1</div>
<div class="cell" style="left:899px;top:447px;width:35px;text-align:right">1</div>
<div style="left:396px;top:483px;width:542px;height:1px;background:#a9a9a9"></div>
<div class="cell" style="left:406px;top:466px;width:50px;letter-spacing:-0.25px">000004</div>
<div class="cell r" style="left:461px;top:466px;width:357px;font-size:11px">ARTIKAL 4</div>
<div class="cell" style="left:822px;top:466px;width:38px">KOM</div>
<div class="cell" style="left:862px;top:466px;width:36px;text-align:center">S1</div>
<div class="cell" style="left:899px;top:466px;width:35px;text-align:right">1</div>
<div style="left:396px;top:502px;width:542px;height:1px;background:#a9a9a9"></div>
<div class="cell" style="left:406px;top:485px;width:50px;letter-spacing:-0.25px">000005</div>
<div class="cell r" style="left:461px;top:485px;width:357px;font-size:11px">ARTIKAL 5</div>
<div class="cell" style="left:822px;top:485px;width:38px">KOM</div>
<div class="cell" style="left:862px;top:485px;width:36px;text-align:center">S1</div>
<div class="cell" style="left:899px;top:485px;width:35px;text-align:right">1</div>
<div style="left:396px;top:521px;width:542px;height:1px;background:#a9a9a9"></div>
<div class="cell" style="left:406px;top:504px;width:50px;letter-spacing:-0.25px">000006</div>
<div class="cell r" style="left:461px;top:504px;width:357px;font-size:11px">PHILIPS CITISCAPE HEADBAND STEREO SLUŠALICE FIXIE ON-EAR GREEN</div>
<div class="cell" style="left:822px;top:504px;width:38px">KOM</div>
<div class="cell" style="left:862px;top:504px;width:36px;text-align:center">S1</div>
<div class="cell" style="left:899px;top:504px;width:35px;text-align:right">1</div>
<div style="left:396px;top:522px;width:544px;height:23px;background:#fff"></div>
<div style="left:458px;top:522px;width:1px;height:3px;background:#a9a9a9"></div>
<div style="left:819px;top:522px;width:1px;height:3px;background:#a9a9a9"></div>
<div style="left:861px;top:522px;width:1px;height:3px;background:#a9a9a9"></div>
<div style="left:898px;top:522px;width:1px;height:3px;background:#a9a9a9"></div>
<div style="left:937px;top:522px;width:1px;height:3px;background:#a9a9a9"></div>
<div style="left:716px;top:525px;width:241px;height:19px;background:#f0f0f0"></div>
<div style="left:940px;top:522px;width:17px;height:23px;background:#f0f0f0"></div>
<div style="left:832px;top:526px;width:68px;height:17px;background:#c9c9c9"></div>
<svg style="left:822px;top:530px" width="6" height="9"><path d="M4.8 1.2L1.4 4.5L4.8 7.8" stroke="#505050" stroke-width="2.1" fill="none"/></svg>
<svg style="left:929px;top:530px" width="6" height="9"><path d="M1.2 1.2L4.6 4.5L1.2 7.8" stroke="#505050" stroke-width="2.1" fill="none"/></svg>
<div class="nb" style="left:397px;top:526px;width:15px;height:17px;"></div>
<svg style="left:398.5px;top:529.5px" width="12" height="10.8" viewBox="0 0 10 9"><rect x="0" y="1" width="1.4" height="7" fill="#1c2a58"/><path d="M5.6 1L1.6 4.5L5.6 8Z" fill="#1c2a58"/><path d="M9.6 1L5.6 4.5L9.6 8Z" fill="#1c2a58"/></svg>
<div class="nb" style="left:414px;top:526px;width:15px;height:17px;"></div>
<svg style="left:415.5px;top:529.5px" width="12" height="10.8" viewBox="0 0 10 9"><path d="M4.5 1L0.5 4.5L4.5 8Z" fill="#1c2a58"/><path d="M9 1L5 4.5L9 8Z" fill="#1c2a58"/></svg>
<div class="nb" style="left:431px;top:526px;width:15px;height:17px;"></div>
<svg style="left:432.5px;top:529.5px" width="12" height="10.8" viewBox="0 0 10 9"><path d="M7 1L3 4.5L7 8Z" fill="#1c2a58"/></svg>
<div class="t" style="left:454px;top:527px;font-size:12.6px">10 od 79</div>
<div class="nb" style="left:512px;top:526px;width:15px;height:17px;"></div>
<svg style="left:513.5px;top:529.5px" width="12" height="10.8" viewBox="0 0 10 9"><path d="M3 1L7 4.5L3 8Z" fill="#1c2a58"/></svg>
<div class="nb" style="left:529px;top:526px;width:15px;height:17px;"></div>
<svg style="left:530.5px;top:529.5px" width="12" height="10.8" viewBox="0 0 10 9"><path d="M0.5 1L4.5 4.5L0.5 8Z" fill="#1c2a58"/><path d="M5 1L9 4.5L5 8Z" fill="#1c2a58"/></svg>
<div class="nb" style="left:546px;top:526px;width:15px;height:17px;"></div>
<svg style="left:547.5px;top:529.5px" width="12" height="10.8" viewBox="0 0 10 9"><path d="M0 1L4 4.5L0 8Z" fill="#1c2a58"/><path d="M4 1L8 4.5L4 8Z" fill="#1c2a58"/><rect x="8.2" y="1" width="1.4" height="7" fill="#1c2a58"/></svg>
<div class="nbd" style="left:563px;top:526px;width:15px;height:17px;"></div>
<svg style="left:564.5px;top:529.5px" width="12" height="10.8" viewBox="0 0 10 9"><path d="M1 4.5H9M5 .5V8.5" stroke="#b4b4b4" stroke-width="2"/></svg>
<div class="nbd" style="left:580px;top:526px;width:15px;height:17px;"></div>
<svg style="left:581.5px;top:529.5px" width="12" height="10.8" viewBox="0 0 10 9"><path d="M1 4.5H9" stroke="#b4b4b4" stroke-width="2"/></svg>
<div class="nbd" style="left:597px;top:526px;width:15px;height:17px;"></div>
<svg style="left:598.5px;top:529.5px" width="12" height="10.8" viewBox="0 0 10 9"><path d="M1.5 7L5 2L8.5 7Z" fill="#b4b4b4"/></svg>
<div class="nbd" style="left:614px;top:526px;width:15px;height:17px;"></div>
<svg style="left:615.5px;top:529.5px" width="12" height="10.8" viewBox="0 0 10 9"><path d="M1 4.5L4 7.5L9 1.5" stroke="#b4b4b4" stroke-width="1.8" fill="none"/></svg>
<div class="nbd" style="left:631px;top:526px;width:15px;height:17px;"></div>
<svg style="left:632.5px;top:529.5px" width="12" height="10.8" viewBox="0 0 10 9"><path d="M1.5 1L8.5 8M8.5 1L1.5 8" stroke="#b4b4b4" stroke-width="1.8" fill="none"/></svg>
<div class="nb" style="left:648px;top:526px;width:15px;height:17px;"></div>
<svg style="left:649.5px;top:529.5px" width="12" height="10.8" viewBox="0 0 10 9"><path d="M1.4 6.2Q1.8 2.2 5.4 2.4Q7.8 2.8 7.9 5" stroke="#1c2a58" stroke-width="1.5" fill="none"/><path d="M5.2 4.6L10 4.4L8.4 8.6Z" fill="#1c2a58"/></svg>
<div class="nb" style="left:665px;top:526px;width:15px;height:17px;"></div>
<svg style="left:666.5px;top:529.5px" width="12" height="10.8" viewBox="0 0 10 9"><path d="M5 .4V8.6M.8 4.5H9.2M2 1.5L8 7.5M8 1.5L2 7.5" stroke="#000" stroke-width="1"/></svg>
<div class="nbd" style="left:682px;top:526px;width:15px;height:17px;"></div>
<svg style="left:683.5px;top:529.5px" width="12" height="10.8" viewBox="0 0 10 9"><path d="M0 1L3 3.5L0 6Z" fill="#909090"/><path d="M6.5 1.5V9M3 5.2H10M4 2.6L9 7.8M9 2.6L4 7.8" stroke="#a0a0a0" stroke-width="1"/></svg>
<div class="nbd" style="left:699px;top:526px;width:15px;height:17px;"></div>
<svg style="left:700.5px;top:529.5px" width="12" height="10.8" viewBox="0 0 10 9"><path d="M1.5 1.5H8.5L5.8 4.6V8H4.2V4.6Z" fill="#b4b4b4"/></svg>
<div style="left:396px;top:544px;width:561px;height:1px;background:#1c3c8c"></div>
<div style="left:396px;top:545px;width:561px;height:31px;background:linear-gradient(#d4e3fa 0%,#b6cef5 45%,#8fb2ea 100%)"></div>
<div class="pan" style="left:396px;top:546px;width:122px;height:28px;"></div>
<div style="left:398px;top:548px;width:118px;height:24px;background:linear-gradient(#f2f2f2,#e0e0e0);border:1px solid #c4c4c4;text-align:center;line-height:22px;font-size:12.6px">F8 - PRIMENI</div>
<div class="pan" style="left:520px;top:546px;width:101px;height:28px;"></div>
<div class="t" style="left:520px;top:552px;width:101px;text-align:center;font-size:11.2px">ENTER - IZLAZ</div>
<div style="left:622px;top:544px;width:198px;height:32px;border:4px solid #a844a8;border-width:5px 4px 4px 5px;background:linear-gradient(#d4e3fa 0%,#b6cef5 45%,#94b5ec 100%)"></div>
<div class="t" style="left:627px;top:553px;width:189px;overflow:hidden;font-size:11.2px;letter-spacing:-0.12px">F12 - PRETRAGA SAMO PRETHODNO IZABRANE</div>
<div class="pan" style="left:821px;top:546px;width:121px;height:28px;"></div>
<div style="left:823px;top:548px;width:117px;height:24px;background:linear-gradient(#f2f2f2,#e0e0e0);border:1px solid #c4c4c4;text-align:center;line-height:22px;font-size:12.6px">F9 - ZADRŽI</div>
<svg style="left:945px;top:562px" width="12" height="12"><g fill="#fff"><rect x="9" y="1" width="2" height="2"/><rect x="5" y="5" width="2" height="2"/><rect x="9" y="5" width="2" height="2"/><rect x="1" y="9" width="2" height="2"/><rect x="5" y="9" width="2" height="2"/><rect x="9" y="9" width="2" height="2"/></g><g fill="#1c2c60"><rect x="8" y="0" width="2" height="2"/><rect x="4" y="4" width="2" height="2"/><rect x="8" y="4" width="2" height="2"/><rect x="0" y="8" width="2" height="2"/><rect x="4" y="8" width="2" height="2"/><rect x="8" y="8" width="2" height="2"/></g></svg>
</body></html>
